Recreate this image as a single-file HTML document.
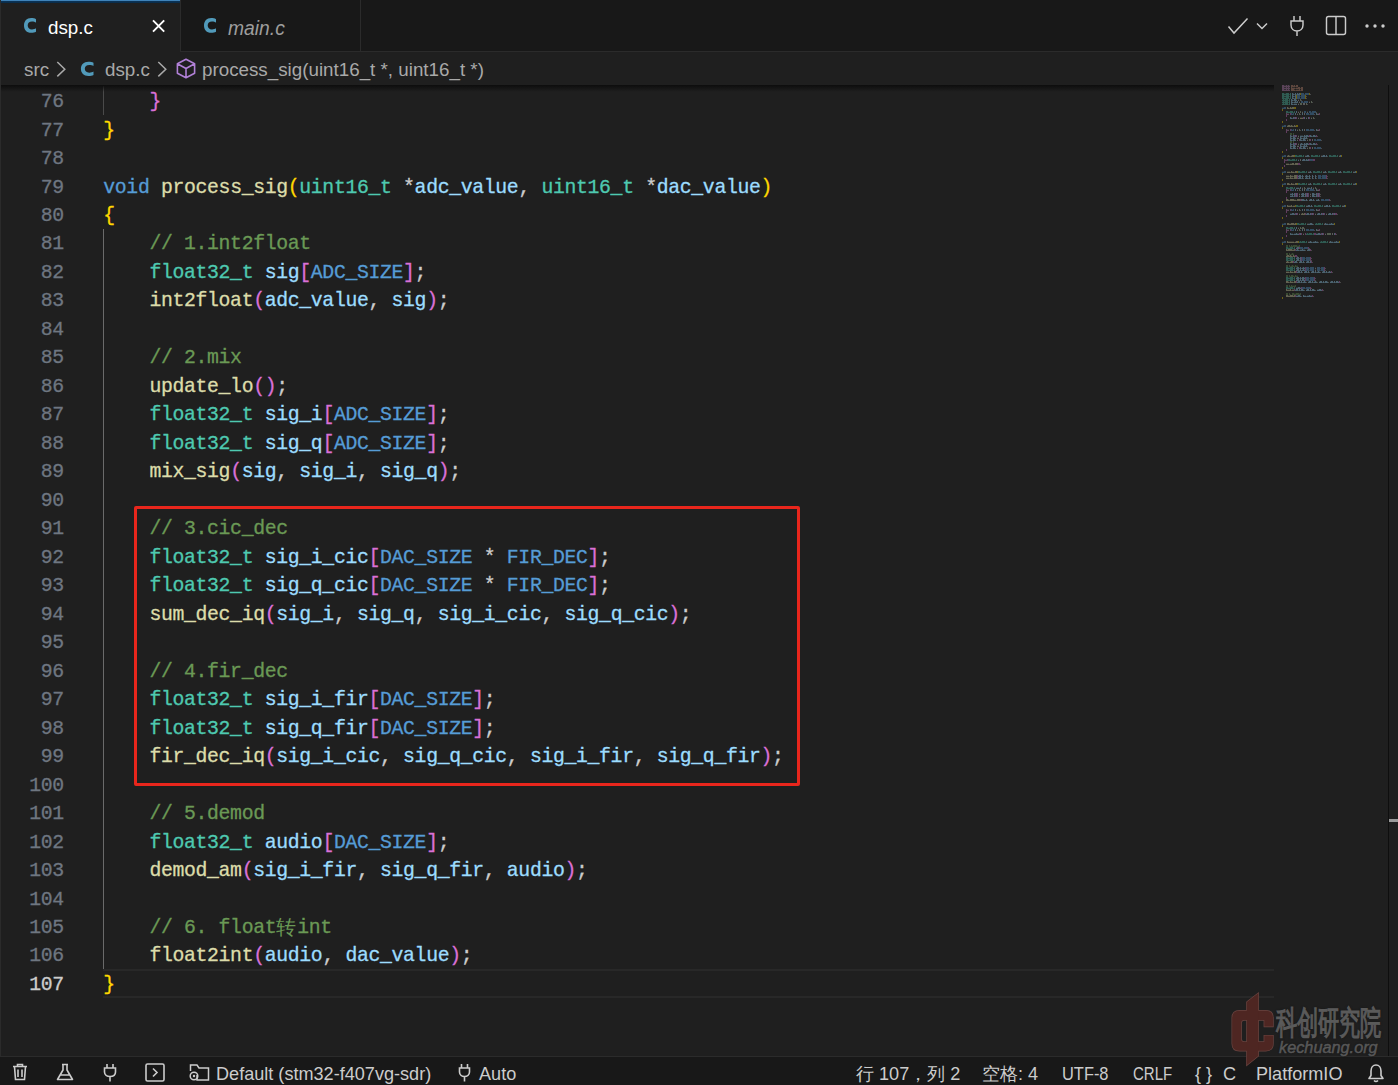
<!DOCTYPE html>
<html><head><meta charset="utf-8">
<style>
*{margin:0;padding:0;box-sizing:border-box}
html,body{width:1398px;height:1085px;overflow:hidden;background:#1f1f1f}
body{position:relative;font-family:"Liberation Sans",sans-serif;color:#cccccc}
.abs{position:absolute}
#tabs{position:absolute;left:0;top:0;width:1398px;height:52px;background:#181818;border-bottom:1px solid #2b2b2b}
#tab1{position:absolute;left:0;top:0;width:181px;height:52px;background:#1f1f1f;border-right:1px solid #2b2b2b}
#tab1 .topb{position:absolute;left:0;top:0;width:180px;height:3px;background:linear-gradient(#3f82b8 0,#3f82b8 1px,#0b3458 1px,#082a48 3px)}
#tab2{position:absolute;left:181px;top:0;width:180px;height:51px;background:#181818;border-right:1px solid #2b2b2b}
.ttxt{position:absolute;font-size:18.8px;line-height:1;white-space:pre}
#bc{position:absolute;left:0;top:52px;width:1398px;height:33px;background:#1f1f1f}
.bct{position:absolute;font-size:18.8px;line-height:1;color:#a9a9a9;white-space:pre}
#editor{position:absolute;left:0;top:85px;width:1398px;height:971px;background:#1f1f1f;overflow:hidden}
#code{position:absolute;left:0;top:-85px;width:1398px;height:1085px}
.ln{position:absolute;left:103.3px;height:28.48px;line-height:28.48px;font-family:"Liberation Mono",monospace;font-size:19.8px;letter-spacing:-0.342px;-webkit-text-stroke-width:0.3px;white-space:pre;padding-top:1.7px}
.nm{position:absolute;left:0;width:63.8px;text-align:right;height:28.48px;line-height:28.48px;font-family:"Liberation Mono",monospace;font-size:19.8px;letter-spacing:-0.342px;-webkit-text-stroke-width:0.3px;color:#6e7681;padding-top:1.7px}
.nm.act{color:#cccccc}
.kw{color:#569cd6}.fn{color:#dcdcaa}.ty{color:#4ec9b0}.var{color:#9cdcfe}.mac{color:#569cd6}
.cm{color:#6a9955}.p{color:#cccccc}.b1{color:#ffd700}.b2{color:#da70d6}.b3{color:#179fff}
.zh{display:inline-block;width:21px;text-indent:-0.5px;position:relative;top:-1.5px;font-family:"Liberation Sans",sans-serif;font-size:20px;vertical-align:top;-webkit-text-stroke-width:0}
.guide{position:absolute;width:1.4px}
#curline{position:absolute;left:103px;top:969.3px;width:1171px;height:28.5px;border-top:2.6px solid #282828;border-bottom:2.6px solid #282828}
#redbox{position:absolute;left:134px;top:506px;width:666px;height:279.5px;border:3.8px solid #e8261c;border-radius:2px}
#shadow{position:absolute;left:0;top:85px;width:1274px;height:7px;background:linear-gradient(#0d0d0d,rgba(0,0,0,0))}
.minimap{position:absolute;left:1282px;top:85px}
#vsb{position:absolute;left:1388px;top:85px;width:1px;height:971px;background:#0e0e0e}
#cursormark{position:absolute;left:1389px;top:819px;width:9px;height:3px;background:#9a9a9a}
#leftb{position:absolute;left:0;top:0;width:1px;height:1056px;background:#2b2b2b}
#status{position:absolute;left:0;top:1056px;width:1398px;height:29px;background:#181818;border-top:1px solid #2b2b2b}
.st{position:absolute;font-size:18.1px;line-height:1;color:#cccccc;white-space:pre;top:1065px}
#ov{position:absolute;left:0;top:0}
.wmzh{position:absolute;left:1276px;top:1008px;font-size:21.4px;line-height:1;color:#5a5a5a;-webkit-text-stroke:0.8px #5a5a5a;white-space:pre;transform-origin:0 0;transform:scale(1,1.55);text-shadow:0 0 2px #111}
.wmen{position:absolute;left:1279px;top:1039px;font-size:16.3px;line-height:1;color:#585858;font-style:italic;-webkit-text-stroke:0.5px #585858;white-space:pre;text-shadow:0 0 2px #111}
</style></head><body>
<div id="tabs">
  <div id="tab1"><div class="topb"></div>
    <div class="ttxt" style="left:48px;top:19px;color:#ffffff">dsp.c</div>
  </div>
  <div id="tab2">
    <div class="ttxt" style="left:47px;top:19px;color:#9d9d9d;font-style:italic;font-size:19.3px">main.c</div>
  </div>
</div>
<div id="bc">
  <div class="bct" style="left:24px;top:9px">src</div>
  <div class="bct" style="left:105px;top:9px">dsp.c</div>
  <div class="bct" style="left:202px;top:9px">process_sig(uint16_t *, uint16_t *)</div>
</div>
<div id="editor"><div id="code">
<div class="nm" style="top:86.40px">76</div>
<div class="nm" style="top:114.88px">77</div>
<div class="nm" style="top:143.36px">78</div>
<div class="nm" style="top:171.84px">79</div>
<div class="nm" style="top:200.32px">80</div>
<div class="nm" style="top:228.80px">81</div>
<div class="nm" style="top:257.28px">82</div>
<div class="nm" style="top:285.76px">83</div>
<div class="nm" style="top:314.24px">84</div>
<div class="nm" style="top:342.72px">85</div>
<div class="nm" style="top:371.20px">86</div>
<div class="nm" style="top:399.68px">87</div>
<div class="nm" style="top:428.16px">88</div>
<div class="nm" style="top:456.64px">89</div>
<div class="nm" style="top:485.12px">90</div>
<div class="nm" style="top:513.60px">91</div>
<div class="nm" style="top:542.08px">92</div>
<div class="nm" style="top:570.56px">93</div>
<div class="nm" style="top:599.04px">94</div>
<div class="nm" style="top:627.52px">95</div>
<div class="nm" style="top:656.00px">96</div>
<div class="nm" style="top:684.48px">97</div>
<div class="nm" style="top:712.96px">98</div>
<div class="nm" style="top:741.44px">99</div>
<div class="nm" style="top:769.92px">100</div>
<div class="nm" style="top:798.40px">101</div>
<div class="nm" style="top:826.88px">102</div>
<div class="nm" style="top:855.36px">103</div>
<div class="nm" style="top:883.84px">104</div>
<div class="nm" style="top:912.32px">105</div>
<div class="nm" style="top:940.80px">106</div>
<div class="nm act" style="top:969.28px">107</div>
<div class="guide" style="left:103px;top:86px;height:28.5px;background:#4a4a4a"></div>
<div class="guide" style="left:103px;top:228.8px;height:740.5px;background:#6a6a6a"></div>
<div id="curline"></div>
<div class="ln" style="top:86.40px"><span class="p">    </span><span class="b2">}</span></div>
<div class="ln" style="top:114.88px"><span class="b1">}</span></div>
<div class="ln" style="top:143.36px"></div>
<div class="ln" style="top:171.84px"><span class="kw">void</span><span class="p"> </span><span class="fn">process_sig</span><span class="b1">(</span><span class="ty">uint16_t</span><span class="p"> *</span><span class="var">adc_value</span><span class="p">, </span><span class="ty">uint16_t</span><span class="p"> *</span><span class="var">dac_value</span><span class="b1">)</span></div>
<div class="ln" style="top:200.32px"><span class="b1">{</span></div>
<div class="ln" style="top:228.80px"><span class="p">    </span><span class="cm">// 1.int2float</span></div>
<div class="ln" style="top:257.28px"><span class="p">    </span><span class="ty">float32_t</span><span class="p"> </span><span class="var">sig</span><span class="b2">[</span><span class="mac">ADC_SIZE</span><span class="b2">]</span><span class="p">;</span></div>
<div class="ln" style="top:285.76px"><span class="p">    </span><span class="fn">int2float</span><span class="b2">(</span><span class="var">adc_value</span><span class="p">, </span><span class="var">sig</span><span class="b2">)</span><span class="p">;</span></div>
<div class="ln" style="top:314.24px"></div>
<div class="ln" style="top:342.72px"><span class="p">    </span><span class="cm">// 2.mix</span></div>
<div class="ln" style="top:371.20px"><span class="p">    </span><span class="fn">update_lo</span><span class="b2">()</span><span class="p">;</span></div>
<div class="ln" style="top:399.68px"><span class="p">    </span><span class="ty">float32_t</span><span class="p"> </span><span class="var">sig_i</span><span class="b2">[</span><span class="mac">ADC_SIZE</span><span class="b2">]</span><span class="p">;</span></div>
<div class="ln" style="top:428.16px"><span class="p">    </span><span class="ty">float32_t</span><span class="p"> </span><span class="var">sig_q</span><span class="b2">[</span><span class="mac">ADC_SIZE</span><span class="b2">]</span><span class="p">;</span></div>
<div class="ln" style="top:456.64px"><span class="p">    </span><span class="fn">mix_sig</span><span class="b2">(</span><span class="var">sig</span><span class="p">, </span><span class="var">sig_i</span><span class="p">, </span><span class="var">sig_q</span><span class="b2">)</span><span class="p">;</span></div>
<div class="ln" style="top:485.12px"></div>
<div class="ln" style="top:513.60px"><span class="p">    </span><span class="cm">// 3.cic_dec</span></div>
<div class="ln" style="top:542.08px"><span class="p">    </span><span class="ty">float32_t</span><span class="p"> </span><span class="var">sig_i_cic</span><span class="b2">[</span><span class="mac">DAC_SIZE</span><span class="p"> * </span><span class="mac">FIR_DEC</span><span class="b2">]</span><span class="p">;</span></div>
<div class="ln" style="top:570.56px"><span class="p">    </span><span class="ty">float32_t</span><span class="p"> </span><span class="var">sig_q_cic</span><span class="b2">[</span><span class="mac">DAC_SIZE</span><span class="p"> * </span><span class="mac">FIR_DEC</span><span class="b2">]</span><span class="p">;</span></div>
<div class="ln" style="top:599.04px"><span class="p">    </span><span class="fn">sum_dec_iq</span><span class="b2">(</span><span class="var">sig_i</span><span class="p">, </span><span class="var">sig_q</span><span class="p">, </span><span class="var">sig_i_cic</span><span class="p">, </span><span class="var">sig_q_cic</span><span class="b2">)</span><span class="p">;</span></div>
<div class="ln" style="top:627.52px"></div>
<div class="ln" style="top:656.00px"><span class="p">    </span><span class="cm">// 4.fir_dec</span></div>
<div class="ln" style="top:684.48px"><span class="p">    </span><span class="ty">float32_t</span><span class="p"> </span><span class="var">sig_i_fir</span><span class="b2">[</span><span class="mac">DAC_SIZE</span><span class="b2">]</span><span class="p">;</span></div>
<div class="ln" style="top:712.96px"><span class="p">    </span><span class="ty">float32_t</span><span class="p"> </span><span class="var">sig_q_fir</span><span class="b2">[</span><span class="mac">DAC_SIZE</span><span class="b2">]</span><span class="p">;</span></div>
<div class="ln" style="top:741.44px"><span class="p">    </span><span class="fn">fir_dec_iq</span><span class="b2">(</span><span class="var">sig_i_cic</span><span class="p">, </span><span class="var">sig_q_cic</span><span class="p">, </span><span class="var">sig_i_fir</span><span class="p">, </span><span class="var">sig_q_fir</span><span class="b2">)</span><span class="p">;</span></div>
<div class="ln" style="top:769.92px"></div>
<div class="ln" style="top:798.40px"><span class="p">    </span><span class="cm">// 5.demod</span></div>
<div class="ln" style="top:826.88px"><span class="p">    </span><span class="ty">float32_t</span><span class="p"> </span><span class="var">audio</span><span class="b2">[</span><span class="mac">DAC_SIZE</span><span class="b2">]</span><span class="p">;</span></div>
<div class="ln" style="top:855.36px"><span class="p">    </span><span class="fn">demod_am</span><span class="b2">(</span><span class="var">sig_i_fir</span><span class="p">, </span><span class="var">sig_q_fir</span><span class="p">, </span><span class="var">audio</span><span class="b2">)</span><span class="p">;</span></div>
<div class="ln" style="top:883.84px"></div>
<div class="ln" style="top:912.32px"><span class="p">    </span><span class="cm">// 6. float</span><span class="cm zh">转</span><span class="cm">int</span></div>
<div class="ln" style="top:940.80px"><span class="p">    </span><span class="fn">float2int</span><span class="b2">(</span><span class="var">audio</span><span class="p">, </span><span class="var">dac_value</span><span class="b2">)</span><span class="p">;</span></div>
<div class="ln" style="top:969.28px"><span class="b1">}</span></div>
<div id="redbox"></div>
</div></div>
<div id="shadow"></div>
<svg class="minimap" width="110" height="230" viewBox="1282 85 110 230"><g opacity="0.6"><path fill="#c586c0" d="M1282 85.3h.8v1.5h-.8zM1283 85.3h.8v1.5h-.8zM1284 85.8h.8v1h-.8zM1285 85.8h.8v1h-.8zM1286 85.3h.8v1.5h-.8zM1287 85.8h.8v1h-.8zM1288 85.3h.8v1.5h-.8zM1289 85.8h.8v1h-.8zM1282 87.3h.8v1.5h-.8zM1283 87.3h.8v1.5h-.8zM1284 87.8h.8v1h-.8zM1285 87.8h.8v1h-.8zM1286 87.3h.8v1.5h-.8zM1287 87.8h.8v1h-.8zM1288 87.3h.8v1.5h-.8zM1289 87.8h.8v1h-.8zM1282 89.3h.8v1.5h-.8zM1283 89.3h.8v1.5h-.8zM1284 89.8h.8v1h-.8zM1285 89.8h.8v1h-.8zM1286 89.3h.8v1.5h-.8zM1287 89.8h.8v1h-.8zM1288 89.3h.8v1.5h-.8zM1289 89.8h.8v1h-.8zM1286 113.3h.8v1.5h-.8zM1287 113.8h.8v1h-.8zM1288 113.8h.8v1h-.8zM1286 129.3h.8v1.5h-.8zM1287 129.8h.8v1h-.8zM1288 129.8h.8v1h-.8zM1284 159.3h.8v1.5h-.8zM1285 159.8h.8v1h-.8zM1286 159.8h.8v1h-.8zM1286 189.3h.8v1.5h-.8zM1287 189.8h.8v1h-.8zM1288 189.8h.8v1h-.8zM1286 209.3h.8v1.5h-.8zM1287 209.8h.8v1h-.8zM1288 209.8h.8v1h-.8zM1286 229.3h.8v1.5h-.8zM1287 229.8h.8v1h-.8zM1288 229.8h.8v1h-.8z"/><path fill="#ce9178" d="M1291 85.3h.8v1.5h-.8zM1292 85.3h.8v1.5h-.8zM1293 85.8h.8v1h-.8zM1294 85.3h.8v1.5h-.8zM1295 86.2h.8v.6h-.8zM1296 85.3h.8v1.5h-.8zM1297 85.3h.8v1.5h-.8zM1291 87.3h.8v1.5h-.8zM1292 87.8h.8v1h-.8zM1293 87.8h.8v1h-.8zM1294 87.8h.8v1h-.8zM1295 88.2h.8v.6h-.8zM1296 87.8h.8v1h-.8zM1297 87.8h.8v1h-.8zM1298 87.3h.8v1.5h-.8zM1299 87.3h.8v1.5h-.8zM1300 88.2h.8v.6h-.8zM1301 87.3h.8v1.5h-.8zM1302 87.3h.8v1.5h-.8zM1291 89.3h.8v1.5h-.8zM1292 89.3h.8v1.5h-.8zM1293 89.3h.8v1.5h-.8zM1294 89.8h.8v1h-.8zM1295 90.2h.8v.6h-.8zM1296 89.8h.8v1h-.8zM1297 89.8h.8v1h-.8zM1298 89.8h.8v1h-.8zM1299 89.3h.8v1.5h-.8zM1300 90.2h.8v.6h-.8zM1301 89.3h.8v1.5h-.8zM1302 89.3h.8v1.5h-.8z"/><path fill="#4ec9b0" d="M1282 93.3h.8v1.5h-.8zM1283 93.3h.8v1.5h-.8zM1284 93.8h.8v1h-.8zM1285 93.8h.8v1h-.8zM1286 93.3h.8v1.5h-.8zM1287 93.3h.8v1.5h-.8zM1288 93.3h.8v1.5h-.8zM1289 94.2h.8v.6h-.8zM1290 93.3h.8v1.5h-.8zM1282 95.3h.8v1.5h-.8zM1283 95.3h.8v1.5h-.8zM1284 95.8h.8v1h-.8zM1285 95.8h.8v1h-.8zM1286 95.3h.8v1.5h-.8zM1287 95.3h.8v1.5h-.8zM1288 95.3h.8v1.5h-.8zM1289 96.2h.8v.6h-.8zM1290 95.3h.8v1.5h-.8zM1282 97.3h.8v1.5h-.8zM1283 97.3h.8v1.5h-.8zM1284 97.8h.8v1h-.8zM1285 97.8h.8v1h-.8zM1286 97.3h.8v1.5h-.8zM1287 97.3h.8v1.5h-.8zM1288 97.3h.8v1.5h-.8zM1289 98.2h.8v.6h-.8zM1290 97.3h.8v1.5h-.8zM1282 99.8h.8v1h-.8zM1283 99.3h.8v1.5h-.8zM1284 99.8h.8v1h-.8zM1285 99.3h.8v1.5h-.8zM1286 99.3h.8v1.5h-.8zM1287 99.3h.8v1.5h-.8zM1288 100.2h.8v.6h-.8zM1289 99.3h.8v1.5h-.8zM1282 101.8h.8v1h-.8zM1283 101.3h.8v1.5h-.8zM1284 101.8h.8v1h-.8zM1285 101.3h.8v1.5h-.8zM1286 101.3h.8v1.5h-.8zM1287 101.3h.8v1.5h-.8zM1288 102.2h.8v.6h-.8zM1289 101.3h.8v1.5h-.8zM1282 103.8h.8v1h-.8zM1283 103.3h.8v1.5h-.8zM1284 103.8h.8v1h-.8zM1285 103.3h.8v1.5h-.8zM1286 103.3h.8v1.5h-.8zM1287 103.3h.8v1.5h-.8zM1288 104.2h.8v.6h-.8zM1289 103.3h.8v1.5h-.8zM1286 111.3h.8v1.5h-.8zM1287 111.3h.8v1.5h-.8zM1288 111.8h.8v1h-.8zM1289 111.8h.8v1h-.8zM1290 111.3h.8v1.5h-.8zM1291 111.3h.8v1.5h-.8zM1292 111.3h.8v1.5h-.8zM1293 112.2h.8v.6h-.8zM1294 111.3h.8v1.5h-.8zM1295 155.3h.8v1.5h-.8zM1296 155.3h.8v1.5h-.8zM1297 155.8h.8v1h-.8zM1298 155.8h.8v1h-.8zM1299 155.3h.8v1.5h-.8zM1300 155.3h.8v1.5h-.8zM1301 155.3h.8v1.5h-.8zM1302 156.2h.8v.6h-.8zM1303 155.3h.8v1.5h-.8zM1311 155.3h.8v1.5h-.8zM1312 155.3h.8v1.5h-.8zM1313 155.8h.8v1h-.8zM1314 155.8h.8v1h-.8zM1315 155.3h.8v1.5h-.8zM1316 155.3h.8v1.5h-.8zM1317 155.3h.8v1.5h-.8zM1318 156.2h.8v.6h-.8zM1319 155.3h.8v1.5h-.8zM1329 155.3h.8v1.5h-.8zM1330 155.3h.8v1.5h-.8zM1331 155.8h.8v1h-.8zM1332 155.8h.8v1h-.8zM1333 155.3h.8v1.5h-.8zM1334 155.3h.8v1.5h-.8zM1335 155.3h.8v1.5h-.8zM1336 156.2h.8v.6h-.8zM1337 155.3h.8v1.5h-.8zM1288 159.3h.8v1.5h-.8zM1289 159.3h.8v1.5h-.8zM1290 159.8h.8v1h-.8zM1291 159.8h.8v1h-.8zM1292 159.3h.8v1.5h-.8zM1293 159.3h.8v1.5h-.8zM1294 159.3h.8v1.5h-.8zM1295 160.2h.8v.6h-.8zM1296 159.3h.8v1.5h-.8zM1298 171.3h.8v1.5h-.8zM1299 171.3h.8v1.5h-.8zM1300 171.8h.8v1h-.8zM1301 171.8h.8v1h-.8zM1302 171.3h.8v1.5h-.8zM1303 171.3h.8v1.5h-.8zM1304 171.3h.8v1.5h-.8zM1305 172.2h.8v.6h-.8zM1306 171.3h.8v1.5h-.8zM1313 171.3h.8v1.5h-.8zM1314 171.3h.8v1.5h-.8zM1315 171.8h.8v1h-.8zM1316 171.8h.8v1h-.8zM1317 171.3h.8v1.5h-.8zM1318 171.3h.8v1.5h-.8zM1319 171.3h.8v1.5h-.8zM1320 172.2h.8v.6h-.8zM1321 171.3h.8v1.5h-.8zM1328 171.3h.8v1.5h-.8zM1329 171.3h.8v1.5h-.8zM1330 171.8h.8v1h-.8zM1331 171.8h.8v1h-.8zM1332 171.3h.8v1.5h-.8zM1333 171.3h.8v1.5h-.8zM1334 171.3h.8v1.5h-.8zM1335 172.2h.8v.6h-.8zM1336 171.3h.8v1.5h-.8zM1343 171.3h.8v1.5h-.8zM1344 171.3h.8v1.5h-.8zM1345 171.8h.8v1h-.8zM1346 171.8h.8v1h-.8zM1347 171.3h.8v1.5h-.8zM1348 171.3h.8v1.5h-.8zM1349 171.3h.8v1.5h-.8zM1350 172.2h.8v.6h-.8zM1351 171.3h.8v1.5h-.8zM1298 183.3h.8v1.5h-.8zM1299 183.3h.8v1.5h-.8zM1300 183.8h.8v1h-.8zM1301 183.8h.8v1h-.8zM1302 183.3h.8v1.5h-.8zM1303 183.3h.8v1.5h-.8zM1304 183.3h.8v1.5h-.8zM1305 184.2h.8v.6h-.8zM1306 183.3h.8v1.5h-.8zM1313 183.3h.8v1.5h-.8zM1314 183.3h.8v1.5h-.8zM1315 183.8h.8v1h-.8zM1316 183.8h.8v1h-.8zM1317 183.3h.8v1.5h-.8zM1318 183.3h.8v1.5h-.8zM1319 183.3h.8v1.5h-.8zM1320 184.2h.8v.6h-.8zM1321 183.3h.8v1.5h-.8zM1328 183.3h.8v1.5h-.8zM1329 183.3h.8v1.5h-.8zM1330 183.8h.8v1h-.8zM1331 183.8h.8v1h-.8zM1332 183.3h.8v1.5h-.8zM1333 183.3h.8v1.5h-.8zM1334 183.3h.8v1.5h-.8zM1335 184.2h.8v.6h-.8zM1336 183.3h.8v1.5h-.8zM1343 183.3h.8v1.5h-.8zM1344 183.3h.8v1.5h-.8zM1345 183.8h.8v1h-.8zM1346 183.8h.8v1h-.8zM1347 183.3h.8v1.5h-.8zM1348 183.3h.8v1.5h-.8zM1349 183.3h.8v1.5h-.8zM1350 184.2h.8v.6h-.8zM1351 183.3h.8v1.5h-.8zM1286 187.3h.8v1.5h-.8zM1287 187.3h.8v1.5h-.8zM1288 187.8h.8v1h-.8zM1289 187.8h.8v1h-.8zM1290 187.3h.8v1.5h-.8zM1291 187.3h.8v1.5h-.8zM1292 187.3h.8v1.5h-.8zM1293 188.2h.8v.6h-.8zM1294 187.3h.8v1.5h-.8zM1296 205.3h.8v1.5h-.8zM1297 205.3h.8v1.5h-.8zM1298 205.8h.8v1h-.8zM1299 205.8h.8v1h-.8zM1300 205.3h.8v1.5h-.8zM1301 205.3h.8v1.5h-.8zM1302 205.3h.8v1.5h-.8zM1303 206.2h.8v.6h-.8zM1304 205.3h.8v1.5h-.8zM1314 205.3h.8v1.5h-.8zM1315 205.3h.8v1.5h-.8zM1316 205.8h.8v1h-.8zM1317 205.8h.8v1h-.8zM1318 205.3h.8v1.5h-.8zM1319 205.3h.8v1.5h-.8zM1320 205.3h.8v1.5h-.8zM1321 206.2h.8v.6h-.8zM1322 205.3h.8v1.5h-.8zM1332 205.3h.8v1.5h-.8zM1333 205.3h.8v1.5h-.8zM1334 205.8h.8v1h-.8zM1335 205.8h.8v1h-.8zM1336 205.3h.8v1.5h-.8zM1337 205.3h.8v1.5h-.8zM1338 205.3h.8v1.5h-.8zM1339 206.2h.8v.6h-.8zM1340 205.3h.8v1.5h-.8zM1297 223.3h.8v1.5h-.8zM1298 223.3h.8v1.5h-.8zM1299 223.8h.8v1h-.8zM1300 223.8h.8v1h-.8zM1301 223.3h.8v1.5h-.8zM1302 223.3h.8v1.5h-.8zM1303 223.3h.8v1.5h-.8zM1304 224.2h.8v.6h-.8zM1305 223.3h.8v1.5h-.8zM1315 223.8h.8v1h-.8zM1316 223.3h.8v1.5h-.8zM1317 223.8h.8v1h-.8zM1318 223.3h.8v1.5h-.8zM1319 223.3h.8v1.5h-.8zM1320 223.3h.8v1.5h-.8zM1321 224.2h.8v.6h-.8zM1322 223.3h.8v1.5h-.8zM1286 227.3h.8v1.5h-.8zM1287 227.3h.8v1.5h-.8zM1288 227.8h.8v1h-.8zM1289 227.8h.8v1h-.8zM1290 227.3h.8v1.5h-.8zM1291 227.3h.8v1.5h-.8zM1292 227.3h.8v1.5h-.8zM1293 228.2h.8v.6h-.8zM1294 227.3h.8v1.5h-.8zM1306 233.8h.8v1h-.8zM1307 233.3h.8v1.5h-.8zM1308 233.8h.8v1h-.8zM1309 233.3h.8v1.5h-.8zM1310 233.3h.8v1.5h-.8zM1311 233.3h.8v1.5h-.8zM1312 234.2h.8v.6h-.8zM1313 233.3h.8v1.5h-.8zM1299 241.8h.8v1h-.8zM1300 241.3h.8v1.5h-.8zM1301 241.8h.8v1h-.8zM1302 241.3h.8v1.5h-.8zM1303 241.3h.8v1.5h-.8zM1304 241.3h.8v1.5h-.8zM1305 242.2h.8v.6h-.8zM1306 241.3h.8v1.5h-.8zM1320 241.8h.8v1h-.8zM1321 241.3h.8v1.5h-.8zM1322 241.8h.8v1h-.8zM1323 241.3h.8v1.5h-.8zM1324 241.3h.8v1.5h-.8zM1325 241.3h.8v1.5h-.8zM1326 242.2h.8v.6h-.8zM1327 241.3h.8v1.5h-.8zM1286 247.3h.8v1.5h-.8zM1287 247.3h.8v1.5h-.8zM1288 247.8h.8v1h-.8zM1289 247.8h.8v1h-.8zM1290 247.3h.8v1.5h-.8zM1291 247.3h.8v1.5h-.8zM1292 247.3h.8v1.5h-.8zM1293 248.2h.8v.6h-.8zM1294 247.3h.8v1.5h-.8zM1286 257.3h.8v1.5h-.8zM1287 257.3h.8v1.5h-.8zM1288 257.8h.8v1h-.8zM1289 257.8h.8v1h-.8zM1290 257.3h.8v1.5h-.8zM1291 257.3h.8v1.5h-.8zM1292 257.3h.8v1.5h-.8zM1293 258.2h.8v.6h-.8zM1294 257.3h.8v1.5h-.8zM1286 259.3h.8v1.5h-.8zM1287 259.3h.8v1.5h-.8zM1288 259.8h.8v1h-.8zM1289 259.8h.8v1h-.8zM1290 259.3h.8v1.5h-.8zM1291 259.3h.8v1.5h-.8zM1292 259.3h.8v1.5h-.8zM1293 260.2h.8v.6h-.8zM1294 259.3h.8v1.5h-.8zM1286 267.3h.8v1.5h-.8zM1287 267.3h.8v1.5h-.8zM1288 267.8h.8v1h-.8zM1289 267.8h.8v1h-.8zM1290 267.3h.8v1.5h-.8zM1291 267.3h.8v1.5h-.8zM1292 267.3h.8v1.5h-.8zM1293 268.2h.8v.6h-.8zM1294 267.3h.8v1.5h-.8zM1286 269.3h.8v1.5h-.8zM1287 269.3h.8v1.5h-.8zM1288 269.8h.8v1h-.8zM1289 269.8h.8v1h-.8zM1290 269.3h.8v1.5h-.8zM1291 269.3h.8v1.5h-.8zM1292 269.3h.8v1.5h-.8zM1293 270.2h.8v.6h-.8zM1294 269.3h.8v1.5h-.8zM1286 277.3h.8v1.5h-.8zM1287 277.3h.8v1.5h-.8zM1288 277.8h.8v1h-.8zM1289 277.8h.8v1h-.8zM1290 277.3h.8v1.5h-.8zM1291 277.3h.8v1.5h-.8zM1292 277.3h.8v1.5h-.8zM1293 278.2h.8v.6h-.8zM1294 277.3h.8v1.5h-.8zM1286 279.3h.8v1.5h-.8zM1287 279.3h.8v1.5h-.8zM1288 279.8h.8v1h-.8zM1289 279.8h.8v1h-.8zM1290 279.3h.8v1.5h-.8zM1291 279.3h.8v1.5h-.8zM1292 279.3h.8v1.5h-.8zM1293 280.2h.8v.6h-.8zM1294 279.3h.8v1.5h-.8zM1286 287.3h.8v1.5h-.8zM1287 287.3h.8v1.5h-.8zM1288 287.8h.8v1h-.8zM1289 287.8h.8v1h-.8zM1290 287.3h.8v1.5h-.8zM1291 287.3h.8v1.5h-.8zM1292 287.3h.8v1.5h-.8zM1293 288.2h.8v.6h-.8zM1294 287.3h.8v1.5h-.8z"/><path fill="#9cdcfe" d="M1292 93.3h.8v1.5h-.8zM1293 93.8h.8v1h-.8zM1294 94.2h.8v.6h-.8zM1295 93.3h.8v1.5h-.8zM1296 94.2h.8v.6h-.8zM1297 93.3h.8v1.5h-.8zM1298 93.8h.8v1h-.8zM1299 93.3h.8v1.5h-.8zM1292 95.3h.8v1.5h-.8zM1293 95.8h.8v1h-.8zM1294 96.2h.8v.6h-.8zM1295 95.3h.8v1.5h-.8zM1292 97.3h.8v1.5h-.8zM1293 97.8h.8v1h-.8zM1294 98.2h.8v.6h-.8zM1295 97.3h.8v1.5h-.8zM1291 99.3h.8v1.5h-.8zM1292 99.8h.8v1h-.8zM1293 100.2h.8v.6h-.8zM1294 99.3h.8v1.5h-.8zM1295 99.3h.8v1.5h-.8zM1296 99.8h.8v1h-.8zM1291 101.3h.8v1.5h-.8zM1292 101.8h.8v1h-.8zM1293 102.2h.8v.6h-.8zM1294 101.8h.8v1h-.8zM1295 101.3h.8v1.5h-.8zM1296 101.8h.8v1h-.8zM1297 101.3h.8v1.5h-.8zM1291 103.3h.8v1.5h-.8zM1292 103.8h.8v1h-.8zM1293 104.2h.8v.6h-.8zM1294 103.8h.8v1h-.8zM1295 103.8h.8v1h-.8zM1296 103.8h.8v1h-.8zM1296 111.3h.8v1.5h-.8zM1295 113.3h.8v1.5h-.8zM1302 113.3h.8v1.5h-.8zM1316 113.3h.8v1.5h-.8zM1290 117.3h.8v1.5h-.8zM1291 117.8h.8v1h-.8zM1292 118.2h.8v.6h-.8zM1293 117.3h.8v1.5h-.8zM1295 117.3h.8v1.5h-.8zM1304 117.3h.8v1.5h-.8zM1308 117.3h.8v1.5h-.8zM1295 129.3h.8v1.5h-.8zM1302 129.3h.8v1.5h-.8zM1316 129.3h.8v1.5h-.8zM1290 135.3h.8v1.5h-.8zM1291 135.8h.8v1h-.8zM1292 136.2h.8v.6h-.8zM1293 135.3h.8v1.5h-.8zM1295 135.3h.8v1.5h-.8zM1300 135.8h.8v1h-.8zM1301 135.8h.8v1h-.8zM1302 135.8h.8v1h-.8zM1303 136.2h.8v.6h-.8zM1304 135.3h.8v1.5h-.8zM1305 135.8h.8v1h-.8zM1306 135.3h.8v1.5h-.8zM1307 135.3h.8v1.5h-.8zM1308 135.8h.8v1h-.8zM1310 135.3h.8v1.5h-.8zM1311 135.8h.8v1h-.8zM1312 136.2h.8v.6h-.8zM1313 135.3h.8v1.5h-.8zM1314 135.3h.8v1.5h-.8zM1315 135.8h.8v1h-.8zM1290 137.3h.8v1.5h-.8zM1291 137.8h.8v1h-.8zM1292 138.2h.8v.6h-.8zM1293 137.3h.8v1.5h-.8zM1294 137.3h.8v1.5h-.8zM1295 137.8h.8v1h-.8zM1300 137.3h.8v1.5h-.8zM1301 137.8h.8v1h-.8zM1302 138.2h.8v.6h-.8zM1303 137.8h.8v1h-.8zM1304 137.3h.8v1.5h-.8zM1305 137.8h.8v1h-.8zM1306 137.3h.8v1.5h-.8zM1290 139.3h.8v1.5h-.8zM1291 139.8h.8v1h-.8zM1292 140.2h.8v.6h-.8zM1293 139.3h.8v1.5h-.8zM1294 139.3h.8v1.5h-.8zM1295 139.8h.8v1h-.8zM1300 139.3h.8v1.5h-.8zM1301 139.8h.8v1h-.8zM1302 140.2h.8v.6h-.8zM1303 139.3h.8v1.5h-.8zM1304 139.3h.8v1.5h-.8zM1305 139.8h.8v1h-.8zM1290 143.3h.8v1.5h-.8zM1291 143.8h.8v1h-.8zM1292 144.2h.8v.6h-.8zM1293 143.3h.8v1.5h-.8zM1295 143.3h.8v1.5h-.8zM1300 143.8h.8v1h-.8zM1301 143.3h.8v1.5h-.8zM1302 143.8h.8v1h-.8zM1303 144.2h.8v.6h-.8zM1304 143.3h.8v1.5h-.8zM1305 143.8h.8v1h-.8zM1306 143.3h.8v1.5h-.8zM1307 143.3h.8v1.5h-.8zM1308 143.8h.8v1h-.8zM1310 143.3h.8v1.5h-.8zM1311 143.8h.8v1h-.8zM1312 144.2h.8v.6h-.8zM1313 143.3h.8v1.5h-.8zM1314 143.3h.8v1.5h-.8zM1315 143.8h.8v1h-.8zM1290 145.3h.8v1.5h-.8zM1291 145.8h.8v1h-.8zM1292 146.2h.8v.6h-.8zM1293 145.3h.8v1.5h-.8zM1294 145.3h.8v1.5h-.8zM1295 145.8h.8v1h-.8zM1300 145.3h.8v1.5h-.8zM1301 145.8h.8v1h-.8zM1302 146.2h.8v.6h-.8zM1303 145.8h.8v1h-.8zM1304 145.3h.8v1.5h-.8zM1305 145.8h.8v1h-.8zM1306 145.3h.8v1.5h-.8zM1290 147.3h.8v1.5h-.8zM1291 147.8h.8v1h-.8zM1292 148.2h.8v.6h-.8zM1293 147.3h.8v1.5h-.8zM1294 147.3h.8v1.5h-.8zM1295 147.8h.8v1h-.8zM1300 147.3h.8v1.5h-.8zM1301 147.8h.8v1h-.8zM1302 148.2h.8v.6h-.8zM1303 147.3h.8v1.5h-.8zM1304 147.3h.8v1.5h-.8zM1305 147.8h.8v1h-.8zM1306 155.8h.8v1h-.8zM1307 155.3h.8v1.5h-.8zM1308 155.3h.8v1.5h-.8zM1322 155.8h.8v1h-.8zM1323 155.3h.8v1.5h-.8zM1324 155.3h.8v1.5h-.8zM1325 156.2h.8v.6h-.8zM1326 155.3h.8v1.5h-.8zM1340 155.3h.8v1.5h-.8zM1298 159.8h.8v1h-.8zM1302 159.8h.8v1h-.8zM1303 159.3h.8v1.5h-.8zM1304 159.3h.8v1.5h-.8zM1305 160.2h.8v.6h-.8zM1306 159.3h.8v1.5h-.8zM1307 159.8h.8v1h-.8zM1308 159.3h.8v1.5h-.8zM1309 171.8h.8v1h-.8zM1310 171.3h.8v1.5h-.8zM1324 171.8h.8v1h-.8zM1325 171.3h.8v1.5h-.8zM1339 171.8h.8v1h-.8zM1340 171.3h.8v1.5h-.8zM1354 171.8h.8v1h-.8zM1355 171.3h.8v1.5h-.8zM1298 175.8h.8v1h-.8zM1299 175.3h.8v1.5h-.8zM1300 175.3h.8v1.5h-.8zM1301 176.2h.8v.6h-.8zM1302 175.3h.8v1.5h-.8zM1305 175.8h.8v1h-.8zM1306 175.3h.8v1.5h-.8zM1307 175.8h.8v1h-.8zM1308 176.2h.8v.6h-.8zM1309 175.3h.8v1.5h-.8zM1312 175.3h.8v1.5h-.8zM1315 175.3h.8v1.5h-.8zM1298 177.8h.8v1h-.8zM1299 177.3h.8v1.5h-.8zM1300 177.3h.8v1.5h-.8zM1301 178.2h.8v.6h-.8zM1302 177.3h.8v1.5h-.8zM1305 177.8h.8v1h-.8zM1306 177.3h.8v1.5h-.8zM1307 177.8h.8v1h-.8zM1308 178.2h.8v.6h-.8zM1309 177.3h.8v1.5h-.8zM1312 177.3h.8v1.5h-.8zM1315 177.3h.8v1.5h-.8zM1309 183.8h.8v1h-.8zM1310 183.3h.8v1.5h-.8zM1324 183.8h.8v1h-.8zM1325 183.3h.8v1.5h-.8zM1339 183.8h.8v1h-.8zM1340 183.3h.8v1.5h-.8zM1354 183.8h.8v1h-.8zM1355 183.3h.8v1.5h-.8zM1296 187.8h.8v1h-.8zM1297 187.8h.8v1h-.8zM1298 187.8h.8v1h-.8zM1299 188.2h.8v.6h-.8zM1300 187.3h.8v1.5h-.8zM1307 187.8h.8v1h-.8zM1308 187.8h.8v1h-.8zM1309 187.8h.8v1h-.8zM1310 188.2h.8v.6h-.8zM1311 187.3h.8v1.5h-.8zM1295 189.3h.8v1.5h-.8zM1302 189.3h.8v1.5h-.8zM1316 189.3h.8v1.5h-.8zM1290 193.8h.8v1h-.8zM1291 193.8h.8v1h-.8zM1292 193.3h.8v1.5h-.8zM1293 194.2h.8v.6h-.8zM1294 193.3h.8v1.5h-.8zM1296 193.3h.8v1.5h-.8zM1301 193.8h.8v1h-.8zM1302 193.3h.8v1.5h-.8zM1303 193.3h.8v1.5h-.8zM1304 194.2h.8v.6h-.8zM1305 193.3h.8v1.5h-.8zM1307 193.3h.8v1.5h-.8zM1312 193.3h.8v1.5h-.8zM1313 193.3h.8v1.5h-.8zM1314 193.8h.8v1h-.8zM1315 194.2h.8v.6h-.8zM1316 193.3h.8v1.5h-.8zM1318 193.3h.8v1.5h-.8zM1290 195.8h.8v1h-.8zM1291 195.8h.8v1h-.8zM1292 195.3h.8v1.5h-.8zM1293 196.2h.8v.6h-.8zM1294 195.3h.8v1.5h-.8zM1296 195.3h.8v1.5h-.8zM1301 195.8h.8v1h-.8zM1302 195.3h.8v1.5h-.8zM1303 195.3h.8v1.5h-.8zM1304 196.2h.8v.6h-.8zM1305 195.3h.8v1.5h-.8zM1307 195.3h.8v1.5h-.8zM1312 195.3h.8v1.5h-.8zM1313 195.3h.8v1.5h-.8zM1314 195.8h.8v1h-.8zM1315 196.2h.8v.6h-.8zM1316 195.3h.8v1.5h-.8zM1318 195.3h.8v1.5h-.8zM1302 199.3h.8v1.5h-.8zM1303 199.3h.8v1.5h-.8zM1304 199.8h.8v1h-.8zM1305 200.2h.8v.6h-.8zM1306 199.3h.8v1.5h-.8zM1309 199.8h.8v1h-.8zM1310 199.3h.8v1.5h-.8zM1311 199.3h.8v1.5h-.8zM1312 200.2h.8v.6h-.8zM1313 199.3h.8v1.5h-.8zM1316 199.8h.8v1h-.8zM1317 199.8h.8v1h-.8zM1318 199.3h.8v1.5h-.8zM1307 205.8h.8v1h-.8zM1308 205.3h.8v1.5h-.8zM1309 205.3h.8v1.5h-.8zM1310 206.2h.8v.6h-.8zM1311 205.3h.8v1.5h-.8zM1325 205.8h.8v1h-.8zM1326 205.3h.8v1.5h-.8zM1327 205.3h.8v1.5h-.8zM1328 206.2h.8v.6h-.8zM1329 205.3h.8v1.5h-.8zM1343 205.8h.8v1h-.8zM1344 205.3h.8v1.5h-.8zM1295 209.3h.8v1.5h-.8zM1302 209.3h.8v1.5h-.8zM1316 209.3h.8v1.5h-.8zM1290 213.8h.8v1h-.8zM1291 213.8h.8v1h-.8zM1292 213.3h.8v1.5h-.8zM1293 213.3h.8v1.5h-.8zM1294 213.8h.8v1h-.8zM1296 213.3h.8v1.5h-.8zM1306 213.8h.8v1h-.8zM1307 213.3h.8v1.5h-.8zM1308 213.3h.8v1.5h-.8zM1309 214.2h.8v.6h-.8zM1310 213.3h.8v1.5h-.8zM1312 213.3h.8v1.5h-.8zM1317 213.8h.8v1h-.8zM1318 213.3h.8v1.5h-.8zM1319 213.3h.8v1.5h-.8zM1320 214.2h.8v.6h-.8zM1321 213.3h.8v1.5h-.8zM1323 213.3h.8v1.5h-.8zM1328 213.8h.8v1h-.8zM1329 213.3h.8v1.5h-.8zM1330 213.3h.8v1.5h-.8zM1331 214.2h.8v.6h-.8zM1332 213.3h.8v1.5h-.8zM1334 213.3h.8v1.5h-.8zM1308 223.8h.8v1h-.8zM1309 223.8h.8v1h-.8zM1310 223.3h.8v1.5h-.8zM1311 223.3h.8v1.5h-.8zM1312 223.8h.8v1h-.8zM1325 223.3h.8v1.5h-.8zM1326 223.8h.8v1h-.8zM1327 223.8h.8v1h-.8zM1328 224.2h.8v.6h-.8zM1329 223.8h.8v1h-.8zM1330 223.8h.8v1h-.8zM1331 223.3h.8v1.5h-.8zM1332 223.8h.8v1h-.8zM1333 223.8h.8v1h-.8zM1296 227.3h.8v1.5h-.8zM1295 229.3h.8v1.5h-.8zM1302 229.3h.8v1.5h-.8zM1316 229.3h.8v1.5h-.8zM1290 233.3h.8v1.5h-.8zM1291 233.8h.8v1h-.8zM1292 233.8h.8v1h-.8zM1293 234.2h.8v.6h-.8zM1294 233.8h.8v1h-.8zM1295 233.8h.8v1h-.8zM1296 233.3h.8v1.5h-.8zM1297 233.8h.8v1h-.8zM1298 233.8h.8v1h-.8zM1300 233.3h.8v1.5h-.8zM1316 233.8h.8v1h-.8zM1317 233.8h.8v1h-.8zM1318 233.3h.8v1.5h-.8zM1319 233.3h.8v1.5h-.8zM1320 233.8h.8v1h-.8zM1322 233.3h.8v1.5h-.8zM1334 233.3h.8v1.5h-.8zM1309 241.8h.8v1h-.8zM1310 241.3h.8v1.5h-.8zM1311 241.8h.8v1h-.8zM1312 242.2h.8v.6h-.8zM1313 241.8h.8v1h-.8zM1314 241.8h.8v1h-.8zM1315 241.3h.8v1.5h-.8zM1316 241.8h.8v1h-.8zM1317 241.8h.8v1h-.8zM1330 241.3h.8v1.5h-.8zM1331 241.8h.8v1h-.8zM1332 241.8h.8v1h-.8zM1333 242.2h.8v.6h-.8zM1334 241.8h.8v1h-.8zM1335 241.8h.8v1h-.8zM1336 241.3h.8v1.5h-.8zM1337 241.8h.8v1h-.8zM1338 241.8h.8v1h-.8zM1296 247.8h.8v1h-.8zM1297 247.3h.8v1.5h-.8zM1298 247.3h.8v1.5h-.8zM1296 249.8h.8v1h-.8zM1297 249.3h.8v1.5h-.8zM1298 249.8h.8v1h-.8zM1299 250.2h.8v.6h-.8zM1300 249.8h.8v1h-.8zM1301 249.8h.8v1h-.8zM1302 249.3h.8v1.5h-.8zM1303 249.8h.8v1h-.8zM1304 249.8h.8v1h-.8zM1307 249.8h.8v1h-.8zM1308 249.3h.8v1.5h-.8zM1309 249.3h.8v1.5h-.8zM1296 257.8h.8v1h-.8zM1297 257.3h.8v1.5h-.8zM1298 257.3h.8v1.5h-.8zM1299 258.2h.8v.6h-.8zM1300 257.3h.8v1.5h-.8zM1296 259.8h.8v1h-.8zM1297 259.3h.8v1.5h-.8zM1298 259.3h.8v1.5h-.8zM1299 260.2h.8v.6h-.8zM1300 259.3h.8v1.5h-.8zM1294 261.8h.8v1h-.8zM1295 261.3h.8v1.5h-.8zM1296 261.3h.8v1.5h-.8zM1299 261.8h.8v1h-.8zM1300 261.3h.8v1.5h-.8zM1301 261.3h.8v1.5h-.8zM1302 262.2h.8v.6h-.8zM1303 261.3h.8v1.5h-.8zM1306 261.8h.8v1h-.8zM1307 261.3h.8v1.5h-.8zM1308 261.3h.8v1.5h-.8zM1309 262.2h.8v.6h-.8zM1310 261.3h.8v1.5h-.8zM1296 267.8h.8v1h-.8zM1297 267.3h.8v1.5h-.8zM1298 267.3h.8v1.5h-.8zM1299 268.2h.8v.6h-.8zM1300 267.3h.8v1.5h-.8zM1301 268.2h.8v.6h-.8zM1302 267.8h.8v1h-.8zM1303 267.3h.8v1.5h-.8zM1304 267.8h.8v1h-.8zM1296 269.8h.8v1h-.8zM1297 269.3h.8v1.5h-.8zM1298 269.3h.8v1.5h-.8zM1299 270.2h.8v.6h-.8zM1300 269.3h.8v1.5h-.8zM1301 270.2h.8v.6h-.8zM1302 269.8h.8v1h-.8zM1303 269.3h.8v1.5h-.8zM1304 269.8h.8v1h-.8zM1297 271.8h.8v1h-.8zM1298 271.3h.8v1.5h-.8zM1299 271.3h.8v1.5h-.8zM1300 272.2h.8v.6h-.8zM1301 271.3h.8v1.5h-.8zM1304 271.8h.8v1h-.8zM1305 271.3h.8v1.5h-.8zM1306 271.3h.8v1.5h-.8zM1307 272.2h.8v.6h-.8zM1308 271.3h.8v1.5h-.8zM1311 271.8h.8v1h-.8zM1312 271.3h.8v1.5h-.8zM1313 271.3h.8v1.5h-.8zM1314 272.2h.8v.6h-.8zM1315 271.3h.8v1.5h-.8zM1316 272.2h.8v.6h-.8zM1317 271.8h.8v1h-.8zM1318 271.3h.8v1.5h-.8zM1319 271.8h.8v1h-.8zM1322 271.8h.8v1h-.8zM1323 271.3h.8v1.5h-.8zM1324 271.3h.8v1.5h-.8zM1325 272.2h.8v.6h-.8zM1326 271.3h.8v1.5h-.8zM1327 272.2h.8v.6h-.8zM1328 271.8h.8v1h-.8zM1329 271.3h.8v1.5h-.8zM1330 271.8h.8v1h-.8zM1296 277.8h.8v1h-.8zM1297 277.3h.8v1.5h-.8zM1298 277.3h.8v1.5h-.8zM1299 278.2h.8v.6h-.8zM1300 277.3h.8v1.5h-.8zM1301 278.2h.8v.6h-.8zM1302 277.3h.8v1.5h-.8zM1303 277.3h.8v1.5h-.8zM1304 277.8h.8v1h-.8zM1296 279.8h.8v1h-.8zM1297 279.3h.8v1.5h-.8zM1298 279.3h.8v1.5h-.8zM1299 280.2h.8v.6h-.8zM1300 279.3h.8v1.5h-.8zM1301 280.2h.8v.6h-.8zM1302 279.3h.8v1.5h-.8zM1303 279.3h.8v1.5h-.8zM1304 279.8h.8v1h-.8zM1297 281.8h.8v1h-.8zM1298 281.3h.8v1.5h-.8zM1299 281.3h.8v1.5h-.8zM1300 282.2h.8v.6h-.8zM1301 281.3h.8v1.5h-.8zM1302 282.2h.8v.6h-.8zM1303 281.8h.8v1h-.8zM1304 281.3h.8v1.5h-.8zM1305 281.8h.8v1h-.8zM1308 281.8h.8v1h-.8zM1309 281.3h.8v1.5h-.8zM1310 281.3h.8v1.5h-.8zM1311 282.2h.8v.6h-.8zM1312 281.3h.8v1.5h-.8zM1313 282.2h.8v.6h-.8zM1314 281.8h.8v1h-.8zM1315 281.3h.8v1.5h-.8zM1316 281.8h.8v1h-.8zM1319 281.8h.8v1h-.8zM1320 281.3h.8v1.5h-.8zM1321 281.3h.8v1.5h-.8zM1322 282.2h.8v.6h-.8zM1323 281.3h.8v1.5h-.8zM1324 282.2h.8v.6h-.8zM1325 281.3h.8v1.5h-.8zM1326 281.3h.8v1.5h-.8zM1327 281.8h.8v1h-.8zM1330 281.8h.8v1h-.8zM1331 281.3h.8v1.5h-.8zM1332 281.3h.8v1.5h-.8zM1333 282.2h.8v.6h-.8zM1334 281.3h.8v1.5h-.8zM1335 282.2h.8v.6h-.8zM1336 281.3h.8v1.5h-.8zM1337 281.3h.8v1.5h-.8zM1338 281.8h.8v1h-.8zM1296 287.8h.8v1h-.8zM1297 287.8h.8v1h-.8zM1298 287.3h.8v1.5h-.8zM1299 287.3h.8v1.5h-.8zM1300 287.8h.8v1h-.8zM1295 289.8h.8v1h-.8zM1296 289.3h.8v1.5h-.8zM1297 289.3h.8v1.5h-.8zM1298 290.2h.8v.6h-.8zM1299 289.3h.8v1.5h-.8zM1300 290.2h.8v.6h-.8zM1301 289.3h.8v1.5h-.8zM1302 289.3h.8v1.5h-.8zM1303 289.8h.8v1h-.8zM1306 289.8h.8v1h-.8zM1307 289.3h.8v1.5h-.8zM1308 289.3h.8v1.5h-.8zM1309 290.2h.8v.6h-.8zM1310 289.3h.8v1.5h-.8zM1311 290.2h.8v.6h-.8zM1312 289.3h.8v1.5h-.8zM1313 289.3h.8v1.5h-.8zM1314 289.8h.8v1h-.8zM1317 289.8h.8v1h-.8zM1318 289.8h.8v1h-.8zM1319 289.3h.8v1.5h-.8zM1320 289.3h.8v1.5h-.8zM1321 289.8h.8v1h-.8zM1296 295.8h.8v1h-.8zM1297 295.8h.8v1h-.8zM1298 295.3h.8v1.5h-.8zM1299 295.3h.8v1.5h-.8zM1300 295.8h.8v1h-.8zM1303 295.3h.8v1.5h-.8zM1304 295.8h.8v1h-.8zM1305 295.8h.8v1h-.8zM1306 296.2h.8v.6h-.8zM1307 295.8h.8v1h-.8zM1308 295.8h.8v1h-.8zM1309 295.3h.8v1.5h-.8zM1310 295.8h.8v1h-.8zM1311 295.8h.8v1h-.8z"/><path fill="#ffd700" d="M1300 93.3h.8v1.5h-.8zM1309 93.3h.8v1.5h-.8zM1296 95.3h.8v1.5h-.8zM1305 95.3h.8v1.5h-.8zM1296 97.3h.8v1.5h-.8zM1305 97.3h.8v1.5h-.8zM1294 107.3h.8v1.5h-.8zM1295 107.3h.8v1.5h-.8zM1282 109.3h.8v1.5h-.8zM1282 121.3h.8v1.5h-.8zM1296 125.3h.8v1.5h-.8zM1297 125.3h.8v1.5h-.8zM1282 127.3h.8v1.5h-.8zM1282 151.3h.8v1.5h-.8zM1294 155.3h.8v1.5h-.8zM1341 155.3h.8v1.5h-.8zM1282 157.3h.8v1.5h-.8zM1282 167.3h.8v1.5h-.8zM1297 171.3h.8v1.5h-.8zM1356 171.3h.8v1.5h-.8zM1282 173.3h.8v1.5h-.8zM1282 179.3h.8v1.5h-.8zM1297 183.3h.8v1.5h-.8zM1356 183.3h.8v1.5h-.8zM1282 185.3h.8v1.5h-.8zM1282 201.3h.8v1.5h-.8zM1295 205.3h.8v1.5h-.8zM1345 205.3h.8v1.5h-.8zM1282 207.3h.8v1.5h-.8zM1282 217.3h.8v1.5h-.8zM1296 223.3h.8v1.5h-.8zM1334 223.3h.8v1.5h-.8zM1282 225.3h.8v1.5h-.8zM1282 237.3h.8v1.5h-.8zM1298 241.3h.8v1.5h-.8zM1339 241.3h.8v1.5h-.8zM1282 243.3h.8v1.5h-.8zM1282 297.3h.8v1.5h-.8z"/><path fill="#569cd6" d="M1301 93.3h.8v1.5h-.8zM1302 93.3h.8v1.5h-.8zM1303 93.3h.8v1.5h-.8zM1304 94.2h.8v.6h-.8zM1305 93.3h.8v1.5h-.8zM1306 93.3h.8v1.5h-.8zM1307 93.3h.8v1.5h-.8zM1308 93.3h.8v1.5h-.8zM1297 95.3h.8v1.5h-.8zM1298 95.3h.8v1.5h-.8zM1299 95.3h.8v1.5h-.8zM1300 96.2h.8v.6h-.8zM1301 95.3h.8v1.5h-.8zM1302 95.3h.8v1.5h-.8zM1303 95.3h.8v1.5h-.8zM1304 95.3h.8v1.5h-.8zM1297 97.3h.8v1.5h-.8zM1298 97.3h.8v1.5h-.8zM1299 97.3h.8v1.5h-.8zM1300 98.2h.8v.6h-.8zM1301 97.3h.8v1.5h-.8zM1302 97.3h.8v1.5h-.8zM1303 97.3h.8v1.5h-.8zM1304 97.3h.8v1.5h-.8zM1301 101.3h.8v1.5h-.8zM1302 101.3h.8v1.5h-.8zM1303 102.2h.8v.6h-.8zM1304 101.3h.8v1.5h-.8zM1305 101.3h.8v1.5h-.8zM1306 101.3h.8v1.5h-.8zM1307 101.3h.8v1.5h-.8zM1282 107.8h.8v1h-.8zM1283 107.8h.8v1h-.8zM1284 107.3h.8v1.5h-.8zM1285 107.3h.8v1.5h-.8zM1304 111.3h.8v1.5h-.8zM1305 111.3h.8v1.5h-.8zM1309 111.3h.8v1.5h-.8zM1310 111.3h.8v1.5h-.8zM1311 112.2h.8v.6h-.8zM1312 111.3h.8v1.5h-.8zM1313 111.3h.8v1.5h-.8zM1314 111.3h.8v1.5h-.8zM1315 111.3h.8v1.5h-.8zM1291 113.3h.8v1.5h-.8zM1292 113.8h.8v1h-.8zM1293 113.3h.8v1.5h-.8zM1306 113.3h.8v1.5h-.8zM1307 113.3h.8v1.5h-.8zM1308 113.3h.8v1.5h-.8zM1309 114.2h.8v.6h-.8zM1310 113.3h.8v1.5h-.8zM1311 113.3h.8v1.5h-.8zM1312 113.3h.8v1.5h-.8zM1313 113.3h.8v1.5h-.8zM1282 125.8h.8v1h-.8zM1283 125.8h.8v1h-.8zM1284 125.3h.8v1.5h-.8zM1285 125.3h.8v1.5h-.8zM1291 129.3h.8v1.5h-.8zM1292 129.8h.8v1h-.8zM1293 129.3h.8v1.5h-.8zM1306 129.3h.8v1.5h-.8zM1307 129.3h.8v1.5h-.8zM1308 129.3h.8v1.5h-.8zM1309 130.2h.8v.6h-.8zM1310 129.3h.8v1.5h-.8zM1311 129.3h.8v1.5h-.8zM1312 129.3h.8v1.5h-.8zM1313 129.3h.8v1.5h-.8zM1314 139.3h.8v1.5h-.8zM1315 139.3h.8v1.5h-.8zM1316 140.2h.8v.6h-.8zM1317 139.3h.8v1.5h-.8zM1318 139.3h.8v1.5h-.8zM1319 139.3h.8v1.5h-.8zM1320 139.3h.8v1.5h-.8zM1314 147.3h.8v1.5h-.8zM1315 147.3h.8v1.5h-.8zM1316 148.2h.8v.6h-.8zM1317 147.3h.8v1.5h-.8zM1318 147.3h.8v1.5h-.8zM1319 147.3h.8v1.5h-.8zM1320 147.3h.8v1.5h-.8zM1282 155.8h.8v1h-.8zM1283 155.8h.8v1h-.8zM1284 155.3h.8v1.5h-.8zM1285 155.3h.8v1.5h-.8zM1310 159.3h.8v1.5h-.8zM1311 159.3h.8v1.5h-.8zM1312 159.3h.8v1.5h-.8zM1282 171.8h.8v1h-.8zM1283 171.8h.8v1h-.8zM1284 171.3h.8v1.5h-.8zM1285 171.3h.8v1.5h-.8zM1318 175.3h.8v1.5h-.8zM1319 175.3h.8v1.5h-.8zM1320 175.3h.8v1.5h-.8zM1321 176.2h.8v.6h-.8zM1322 175.3h.8v1.5h-.8zM1323 175.3h.8v1.5h-.8zM1324 175.3h.8v1.5h-.8zM1325 175.3h.8v1.5h-.8zM1318 177.3h.8v1.5h-.8zM1319 177.3h.8v1.5h-.8zM1320 177.3h.8v1.5h-.8zM1321 178.2h.8v.6h-.8zM1322 177.3h.8v1.5h-.8zM1323 177.3h.8v1.5h-.8zM1324 177.3h.8v1.5h-.8zM1325 177.3h.8v1.5h-.8zM1282 183.8h.8v1h-.8zM1283 183.8h.8v1h-.8zM1284 183.3h.8v1.5h-.8zM1285 183.3h.8v1.5h-.8zM1291 189.3h.8v1.5h-.8zM1292 189.8h.8v1h-.8zM1293 189.3h.8v1.5h-.8zM1306 189.3h.8v1.5h-.8zM1307 189.3h.8v1.5h-.8zM1308 189.3h.8v1.5h-.8zM1309 190.2h.8v.6h-.8zM1310 189.3h.8v1.5h-.8zM1311 189.3h.8v1.5h-.8zM1312 189.3h.8v1.5h-.8zM1313 189.3h.8v1.5h-.8zM1321 199.3h.8v1.5h-.8zM1322 199.3h.8v1.5h-.8zM1323 199.3h.8v1.5h-.8zM1324 200.2h.8v.6h-.8zM1325 199.3h.8v1.5h-.8zM1326 199.3h.8v1.5h-.8zM1327 199.3h.8v1.5h-.8zM1328 199.3h.8v1.5h-.8zM1282 205.8h.8v1h-.8zM1283 205.8h.8v1h-.8zM1284 205.3h.8v1.5h-.8zM1285 205.3h.8v1.5h-.8zM1291 209.3h.8v1.5h-.8zM1292 209.8h.8v1h-.8zM1293 209.3h.8v1.5h-.8zM1306 209.3h.8v1.5h-.8zM1307 209.3h.8v1.5h-.8zM1308 209.3h.8v1.5h-.8zM1309 210.2h.8v.6h-.8zM1310 209.3h.8v1.5h-.8zM1311 209.3h.8v1.5h-.8zM1312 209.3h.8v1.5h-.8zM1313 209.3h.8v1.5h-.8zM1282 223.8h.8v1h-.8zM1283 223.8h.8v1h-.8zM1284 223.3h.8v1.5h-.8zM1285 223.3h.8v1.5h-.8zM1291 229.3h.8v1.5h-.8zM1292 229.8h.8v1h-.8zM1293 229.3h.8v1.5h-.8zM1306 229.3h.8v1.5h-.8zM1307 229.3h.8v1.5h-.8zM1308 229.3h.8v1.5h-.8zM1309 230.2h.8v.6h-.8zM1310 229.3h.8v1.5h-.8zM1311 229.3h.8v1.5h-.8zM1312 229.3h.8v1.5h-.8zM1313 229.3h.8v1.5h-.8zM1282 241.8h.8v1h-.8zM1283 241.8h.8v1h-.8zM1284 241.3h.8v1.5h-.8zM1285 241.3h.8v1.5h-.8zM1300 247.3h.8v1.5h-.8zM1301 247.3h.8v1.5h-.8zM1302 247.3h.8v1.5h-.8zM1303 248.2h.8v.6h-.8zM1304 247.3h.8v1.5h-.8zM1305 247.3h.8v1.5h-.8zM1306 247.3h.8v1.5h-.8zM1307 247.3h.8v1.5h-.8zM1302 257.3h.8v1.5h-.8zM1303 257.3h.8v1.5h-.8zM1304 257.3h.8v1.5h-.8zM1305 258.2h.8v.6h-.8zM1306 257.3h.8v1.5h-.8zM1307 257.3h.8v1.5h-.8zM1308 257.3h.8v1.5h-.8zM1309 257.3h.8v1.5h-.8zM1302 259.3h.8v1.5h-.8zM1303 259.3h.8v1.5h-.8zM1304 259.3h.8v1.5h-.8zM1305 260.2h.8v.6h-.8zM1306 259.3h.8v1.5h-.8zM1307 259.3h.8v1.5h-.8zM1308 259.3h.8v1.5h-.8zM1309 259.3h.8v1.5h-.8zM1306 267.3h.8v1.5h-.8zM1307 267.3h.8v1.5h-.8zM1308 267.3h.8v1.5h-.8zM1309 268.2h.8v.6h-.8zM1310 267.3h.8v1.5h-.8zM1311 267.3h.8v1.5h-.8zM1312 267.3h.8v1.5h-.8zM1313 267.3h.8v1.5h-.8zM1317 267.3h.8v1.5h-.8zM1318 267.3h.8v1.5h-.8zM1319 267.3h.8v1.5h-.8zM1320 268.2h.8v.6h-.8zM1321 267.3h.8v1.5h-.8zM1322 267.3h.8v1.5h-.8zM1323 267.3h.8v1.5h-.8zM1306 269.3h.8v1.5h-.8zM1307 269.3h.8v1.5h-.8zM1308 269.3h.8v1.5h-.8zM1309 270.2h.8v.6h-.8zM1310 269.3h.8v1.5h-.8zM1311 269.3h.8v1.5h-.8zM1312 269.3h.8v1.5h-.8zM1313 269.3h.8v1.5h-.8zM1317 269.3h.8v1.5h-.8zM1318 269.3h.8v1.5h-.8zM1319 269.3h.8v1.5h-.8zM1320 270.2h.8v.6h-.8zM1321 269.3h.8v1.5h-.8zM1322 269.3h.8v1.5h-.8zM1323 269.3h.8v1.5h-.8zM1306 277.3h.8v1.5h-.8zM1307 277.3h.8v1.5h-.8zM1308 277.3h.8v1.5h-.8zM1309 278.2h.8v.6h-.8zM1310 277.3h.8v1.5h-.8zM1311 277.3h.8v1.5h-.8zM1312 277.3h.8v1.5h-.8zM1313 277.3h.8v1.5h-.8zM1306 279.3h.8v1.5h-.8zM1307 279.3h.8v1.5h-.8zM1308 279.3h.8v1.5h-.8zM1309 280.2h.8v.6h-.8zM1310 279.3h.8v1.5h-.8zM1311 279.3h.8v1.5h-.8zM1312 279.3h.8v1.5h-.8zM1313 279.3h.8v1.5h-.8zM1302 287.3h.8v1.5h-.8zM1303 287.3h.8v1.5h-.8zM1304 287.3h.8v1.5h-.8zM1305 288.2h.8v.6h-.8zM1306 287.3h.8v1.5h-.8zM1307 287.3h.8v1.5h-.8zM1308 287.3h.8v1.5h-.8zM1309 287.3h.8v1.5h-.8z"/><path fill="#cccccc" d="M1310 94.2h.8v.6h-.8zM1306 96.2h.8v.6h-.8zM1306 98.2h.8v.6h-.8zM1298 99.8h.8v1h-.8zM1301 100.2h.8v.6h-.8zM1299 101.8h.8v1h-.8zM1309 101.8h.8v1h-.8zM1312 102.2h.8v.6h-.8zM1298 103.8h.8v1h-.8zM1303 103.3h.8v1.5h-.8zM1304 103.3h.8v1.5h-.8zM1307 104.2h.8v.6h-.8zM1298 111.8h.8v1h-.8zM1302 111.8h.8v1h-.8zM1307 111.8h.8v1h-.8zM1316 112.2h.8v.6h-.8zM1297 113.8h.8v1h-.8zM1300 114.2h.8v.6h-.8zM1304 113.3h.8v1.5h-.8zM1314 114.2h.8v.6h-.8zM1317 113.8h.8v1h-.8zM1318 113.8h.8v1h-.8zM1298 117.8h.8v1h-.8zM1306 117.8h.8v1h-.8zM1311 117.8h.8v1h-.8zM1314 118.2h.8v.6h-.8zM1297 129.8h.8v1h-.8zM1300 130.2h.8v.6h-.8zM1304 129.3h.8v1.5h-.8zM1314 130.2h.8v.6h-.8zM1317 129.8h.8v1h-.8zM1318 129.8h.8v1h-.8zM1298 135.8h.8v1h-.8zM1317 136.2h.8v.6h-.8zM1297 137.8h.8v1h-.8zM1298 137.8h.8v1h-.8zM1307 138.2h.8v.6h-.8zM1297 139.8h.8v1h-.8zM1307 139.8h.8v1h-.8zM1312 139.3h.8v1.5h-.8zM1321 140.2h.8v.6h-.8zM1298 143.8h.8v1h-.8zM1317 144.2h.8v.6h-.8zM1297 145.8h.8v1h-.8zM1298 145.8h.8v1h-.8zM1307 146.2h.8v.6h-.8zM1297 147.8h.8v1h-.8zM1307 147.8h.8v1h-.8zM1312 147.3h.8v1.5h-.8zM1321 148.2h.8v.6h-.8zM1305 155.8h.8v1h-.8zM1309 156.2h.8v.6h-.8zM1321 155.8h.8v1h-.8zM1327 156.2h.8v.6h-.8zM1339 155.8h.8v1h-.8zM1300 159.3h.8v1.5h-.8zM1300 164.2h.8v.6h-.8zM1308 171.8h.8v1h-.8zM1311 172.2h.8v.6h-.8zM1323 171.8h.8v1h-.8zM1326 172.2h.8v.6h-.8zM1338 171.8h.8v1h-.8zM1341 172.2h.8v.6h-.8zM1353 171.8h.8v1h-.8zM1303 176.2h.8v.6h-.8zM1310 176.2h.8v.6h-.8zM1313 176.2h.8v.6h-.8zM1316 176.2h.8v.6h-.8zM1327 176.2h.8v.6h-.8zM1303 178.2h.8v.6h-.8zM1310 178.2h.8v.6h-.8zM1313 178.2h.8v.6h-.8zM1316 178.2h.8v.6h-.8zM1327 178.2h.8v.6h-.8zM1308 183.8h.8v1h-.8zM1311 184.2h.8v.6h-.8zM1323 183.8h.8v1h-.8zM1326 184.2h.8v.6h-.8zM1338 183.8h.8v1h-.8zM1341 184.2h.8v.6h-.8zM1353 183.8h.8v1h-.8zM1302 187.8h.8v1h-.8zM1305 188.2h.8v.6h-.8zM1313 187.8h.8v1h-.8zM1316 188.2h.8v.6h-.8zM1297 189.8h.8v1h-.8zM1300 190.2h.8v.6h-.8zM1304 189.3h.8v1.5h-.8zM1314 190.2h.8v.6h-.8zM1317 189.8h.8v1h-.8zM1318 189.8h.8v1h-.8zM1299 193.8h.8v1h-.8zM1310 193.8h.8v1h-.8zM1320 194.2h.8v.6h-.8zM1299 195.8h.8v1h-.8zM1310 195.8h.8v1h-.8zM1320 196.2h.8v.6h-.8zM1301 199.3h.8v1.5h-.8zM1307 200.2h.8v.6h-.8zM1314 200.2h.8v.6h-.8zM1319 200.2h.8v.6h-.8zM1330 200.2h.8v.6h-.8zM1306 205.8h.8v1h-.8zM1312 206.2h.8v.6h-.8zM1324 205.8h.8v1h-.8zM1330 206.2h.8v.6h-.8zM1342 205.8h.8v1h-.8zM1297 209.8h.8v1h-.8zM1300 210.2h.8v.6h-.8zM1304 209.3h.8v1.5h-.8zM1314 210.2h.8v.6h-.8zM1317 209.8h.8v1h-.8zM1318 209.8h.8v1h-.8zM1299 213.8h.8v1h-.8zM1315 213.8h.8v1h-.8zM1326 213.8h.8v1h-.8zM1337 214.2h.8v.6h-.8zM1307 223.8h.8v1h-.8zM1313 224.2h.8v.6h-.8zM1324 223.8h.8v1h-.8zM1298 227.8h.8v1h-.8zM1304 228.2h.8v.6h-.8zM1297 229.8h.8v1h-.8zM1300 230.2h.8v.6h-.8zM1304 229.3h.8v1.5h-.8zM1314 230.2h.8v.6h-.8zM1317 229.8h.8v1h-.8zM1318 229.8h.8v1h-.8zM1303 233.8h.8v1h-.8zM1325 233.8h.8v1h-.8zM1332 233.3h.8v1.5h-.8zM1336 234.2h.8v.6h-.8zM1308 241.8h.8v1h-.8zM1318 242.2h.8v.6h-.8zM1329 241.8h.8v1h-.8zM1309 248.2h.8v.6h-.8zM1305 250.2h.8v.6h-.8zM1311 250.2h.8v.6h-.8zM1297 256.2h.8v.6h-.8zM1311 258.2h.8v.6h-.8zM1311 260.2h.8v.6h-.8zM1297 262.2h.8v.6h-.8zM1304 262.2h.8v.6h-.8zM1312 262.2h.8v.6h-.8zM1315 267.8h.8v1h-.8zM1325 268.2h.8v.6h-.8zM1315 269.8h.8v1h-.8zM1325 270.2h.8v.6h-.8zM1302 272.2h.8v.6h-.8zM1309 272.2h.8v.6h-.8zM1320 272.2h.8v.6h-.8zM1332 272.2h.8v.6h-.8zM1315 278.2h.8v.6h-.8zM1315 280.2h.8v.6h-.8zM1306 282.2h.8v.6h-.8zM1317 282.2h.8v.6h-.8zM1328 282.2h.8v.6h-.8zM1340 282.2h.8v.6h-.8zM1311 288.2h.8v.6h-.8zM1304 290.2h.8v.6h-.8zM1315 290.2h.8v.6h-.8zM1323 290.2h.8v.6h-.8zM1301 296.2h.8v.6h-.8zM1313 296.2h.8v.6h-.8z"/><path fill="#b5cea8" d="M1300 99.3h.8v1.5h-.8zM1311 101.3h.8v1.5h-.8zM1300 103.3h.8v1.5h-.8zM1301 103.3h.8v1.5h-.8zM1306 103.3h.8v1.5h-.8zM1300 111.3h.8v1.5h-.8zM1299 113.3h.8v1.5h-.8zM1313 117.3h.8v1.5h-.8zM1299 129.3h.8v1.5h-.8zM1309 139.3h.8v1.5h-.8zM1309 147.3h.8v1.5h-.8zM1304 187.3h.8v1.5h-.8zM1315 187.3h.8v1.5h-.8zM1299 189.3h.8v1.5h-.8zM1299 209.3h.8v1.5h-.8zM1300 227.3h.8v1.5h-.8zM1301 228.2h.8v.6h-.8zM1302 227.3h.8v1.5h-.8zM1303 227.3h.8v1.5h-.8zM1299 229.3h.8v1.5h-.8zM1327 233.3h.8v1.5h-.8zM1328 233.3h.8v1.5h-.8zM1329 233.3h.8v1.5h-.8zM1330 233.3h.8v1.5h-.8z"/><path fill="#dcdcaa" d="M1287 107.3h.8v1.5h-.8zM1288 107.8h.8v1h-.8zM1289 108.2h.8v.6h-.8zM1290 107.3h.8v1.5h-.8zM1291 107.8h.8v1h-.8zM1292 107.3h.8v1.5h-.8zM1293 107.3h.8v1.5h-.8zM1300 117.8h.8v1h-.8zM1301 117.8h.8v1h-.8zM1302 117.8h.8v1h-.8zM1287 125.8h.8v1h-.8zM1288 125.3h.8v1.5h-.8zM1289 125.3h.8v1.5h-.8zM1290 125.8h.8v1h-.8zM1291 125.3h.8v1.5h-.8zM1292 125.8h.8v1h-.8zM1293 126.2h.8v.6h-.8zM1294 125.3h.8v1.5h-.8zM1295 125.8h.8v1h-.8zM1287 155.8h.8v1h-.8zM1288 155.3h.8v1.5h-.8zM1289 155.8h.8v1h-.8zM1290 156.2h.8v.6h-.8zM1291 155.8h.8v1h-.8zM1292 155.3h.8v1.5h-.8zM1293 155.3h.8v1.5h-.8zM1286 163.8h.8v1h-.8zM1287 163.8h.8v1h-.8zM1288 163.8h.8v1h-.8zM1289 164.2h.8v.6h-.8zM1290 163.8h.8v1h-.8zM1291 163.8h.8v1h-.8zM1292 163.3h.8v1.5h-.8zM1293 163.3h.8v1.5h-.8zM1294 164.2h.8v.6h-.8zM1295 163.3h.8v1.5h-.8zM1296 163.3h.8v1.5h-.8zM1297 163.3h.8v1.5h-.8zM1287 171.8h.8v1h-.8zM1288 171.8h.8v1h-.8zM1289 171.8h.8v1h-.8zM1290 172.2h.8v.6h-.8zM1291 171.3h.8v1.5h-.8zM1292 171.8h.8v1h-.8zM1293 171.8h.8v1h-.8zM1294 172.2h.8v.6h-.8zM1295 171.3h.8v1.5h-.8zM1296 171.3h.8v1.5h-.8zM1286 175.8h.8v1h-.8zM1287 175.8h.8v1h-.8zM1288 175.8h.8v1h-.8zM1289 176.2h.8v.6h-.8zM1290 175.3h.8v1.5h-.8zM1291 175.8h.8v1h-.8zM1292 175.8h.8v1h-.8zM1293 176.2h.8v.6h-.8zM1294 175.3h.8v1.5h-.8zM1295 175.3h.8v1.5h-.8zM1296 175.3h.8v1.5h-.8zM1286 177.8h.8v1h-.8zM1287 177.8h.8v1h-.8zM1288 177.8h.8v1h-.8zM1289 178.2h.8v.6h-.8zM1290 177.3h.8v1.5h-.8zM1291 177.8h.8v1h-.8zM1292 177.8h.8v1h-.8zM1293 178.2h.8v.6h-.8zM1294 177.3h.8v1.5h-.8zM1295 177.3h.8v1.5h-.8zM1296 177.3h.8v1.5h-.8zM1287 183.3h.8v1.5h-.8zM1288 183.3h.8v1.5h-.8zM1289 183.8h.8v1h-.8zM1290 184.2h.8v.6h-.8zM1291 183.3h.8v1.5h-.8zM1292 183.8h.8v1h-.8zM1293 183.8h.8v1h-.8zM1294 184.2h.8v.6h-.8zM1295 183.3h.8v1.5h-.8zM1296 183.3h.8v1.5h-.8zM1286 199.3h.8v1.5h-.8zM1287 199.3h.8v1.5h-.8zM1288 199.8h.8v1h-.8zM1289 200.2h.8v.6h-.8zM1290 199.3h.8v1.5h-.8zM1291 199.3h.8v1.5h-.8zM1292 199.3h.8v1.5h-.8zM1293 199.3h.8v1.5h-.8zM1294 199.8h.8v1h-.8zM1295 199.8h.8v1h-.8zM1296 200.2h.8v.6h-.8zM1297 199.3h.8v1.5h-.8zM1298 199.3h.8v1.5h-.8zM1299 199.3h.8v1.5h-.8zM1287 205.3h.8v1.5h-.8zM1288 205.8h.8v1h-.8zM1289 205.8h.8v1h-.8zM1290 205.8h.8v1h-.8zM1291 205.3h.8v1.5h-.8zM1292 206.2h.8v.6h-.8zM1293 205.8h.8v1h-.8zM1294 205.8h.8v1h-.8zM1301 213.8h.8v1h-.8zM1302 213.3h.8v1.5h-.8zM1303 213.8h.8v1h-.8zM1304 213.3h.8v1.5h-.8zM1287 223.3h.8v1.5h-.8zM1288 223.3h.8v1.5h-.8zM1289 223.8h.8v1h-.8zM1290 223.8h.8v1h-.8zM1291 223.3h.8v1.5h-.8zM1292 223.3h.8v1.5h-.8zM1293 223.3h.8v1.5h-.8zM1294 223.8h.8v1h-.8zM1295 223.3h.8v1.5h-.8zM1287 241.3h.8v1.5h-.8zM1288 241.8h.8v1h-.8zM1289 241.8h.8v1h-.8zM1290 241.8h.8v1h-.8zM1291 241.8h.8v1h-.8zM1292 241.8h.8v1h-.8zM1293 241.8h.8v1h-.8zM1294 242.2h.8v.6h-.8zM1295 241.8h.8v1h-.8zM1296 241.3h.8v1.5h-.8zM1297 241.3h.8v1.5h-.8zM1286 249.3h.8v1.5h-.8zM1287 249.8h.8v1h-.8zM1288 249.3h.8v1.5h-.8zM1289 249.3h.8v1.5h-.8zM1290 249.3h.8v1.5h-.8zM1291 249.3h.8v1.5h-.8zM1292 249.8h.8v1h-.8zM1293 249.8h.8v1h-.8zM1294 249.3h.8v1.5h-.8zM1286 255.8h.8v1h-.8zM1287 255.3h.8v1.5h-.8zM1288 255.3h.8v1.5h-.8zM1289 255.8h.8v1h-.8zM1290 255.3h.8v1.5h-.8zM1291 255.8h.8v1h-.8zM1292 256.2h.8v.6h-.8zM1293 255.3h.8v1.5h-.8zM1294 255.8h.8v1h-.8zM1286 261.8h.8v1h-.8zM1287 261.3h.8v1.5h-.8zM1288 261.8h.8v1h-.8zM1289 262.2h.8v.6h-.8zM1290 261.8h.8v1h-.8zM1291 261.3h.8v1.5h-.8zM1292 261.3h.8v1.5h-.8zM1286 271.8h.8v1h-.8zM1287 271.8h.8v1h-.8zM1288 271.8h.8v1h-.8zM1289 272.2h.8v.6h-.8zM1290 271.3h.8v1.5h-.8zM1291 271.8h.8v1h-.8zM1292 271.8h.8v1h-.8zM1293 272.2h.8v.6h-.8zM1294 271.3h.8v1.5h-.8zM1295 271.3h.8v1.5h-.8zM1286 281.3h.8v1.5h-.8zM1287 281.3h.8v1.5h-.8zM1288 281.8h.8v1h-.8zM1289 282.2h.8v.6h-.8zM1290 281.3h.8v1.5h-.8zM1291 281.8h.8v1h-.8zM1292 281.8h.8v1h-.8zM1293 282.2h.8v.6h-.8zM1294 281.3h.8v1.5h-.8zM1295 281.3h.8v1.5h-.8zM1286 289.3h.8v1.5h-.8zM1287 289.8h.8v1h-.8zM1288 289.8h.8v1h-.8zM1289 289.8h.8v1h-.8zM1290 289.3h.8v1.5h-.8zM1291 290.2h.8v.6h-.8zM1292 289.8h.8v1h-.8zM1293 289.8h.8v1h-.8zM1286 295.3h.8v1.5h-.8zM1287 295.3h.8v1.5h-.8zM1288 295.8h.8v1h-.8zM1289 295.8h.8v1h-.8zM1290 295.3h.8v1.5h-.8zM1291 295.3h.8v1.5h-.8zM1292 295.3h.8v1.5h-.8zM1293 295.8h.8v1h-.8zM1294 295.3h.8v1.5h-.8z"/><path fill="#da70d6" d="M1290 113.3h.8v1.5h-.8zM1319 113.3h.8v1.5h-.8zM1286 115.3h.8v1.5h-.8zM1294 117.3h.8v1.5h-.8zM1296 117.3h.8v1.5h-.8zM1303 117.3h.8v1.5h-.8zM1309 117.3h.8v1.5h-.8zM1286 119.3h.8v1.5h-.8zM1290 129.3h.8v1.5h-.8zM1319 129.3h.8v1.5h-.8zM1286 131.3h.8v1.5h-.8zM1294 135.3h.8v1.5h-.8zM1296 135.3h.8v1.5h-.8zM1309 135.3h.8v1.5h-.8zM1316 135.3h.8v1.5h-.8zM1299 139.3h.8v1.5h-.8zM1310 139.3h.8v1.5h-.8zM1294 143.3h.8v1.5h-.8zM1296 143.3h.8v1.5h-.8zM1309 143.3h.8v1.5h-.8zM1316 143.3h.8v1.5h-.8zM1299 147.3h.8v1.5h-.8zM1310 147.3h.8v1.5h-.8zM1286 149.3h.8v1.5h-.8zM1287 159.3h.8v1.5h-.8zM1309 159.3h.8v1.5h-.8zM1313 159.3h.8v1.5h-.8zM1314 159.3h.8v1.5h-.8zM1284 161.3h.8v1.5h-.8zM1298 163.3h.8v1.5h-.8zM1299 163.3h.8v1.5h-.8zM1284 165.3h.8v1.5h-.8zM1297 175.3h.8v1.5h-.8zM1326 175.3h.8v1.5h-.8zM1297 177.3h.8v1.5h-.8zM1326 177.3h.8v1.5h-.8zM1290 189.3h.8v1.5h-.8zM1319 189.3h.8v1.5h-.8zM1286 191.3h.8v1.5h-.8zM1295 193.3h.8v1.5h-.8zM1297 193.3h.8v1.5h-.8zM1306 193.3h.8v1.5h-.8zM1308 193.3h.8v1.5h-.8zM1317 193.3h.8v1.5h-.8zM1319 193.3h.8v1.5h-.8zM1295 195.3h.8v1.5h-.8zM1297 195.3h.8v1.5h-.8zM1306 195.3h.8v1.5h-.8zM1308 195.3h.8v1.5h-.8zM1317 195.3h.8v1.5h-.8zM1319 195.3h.8v1.5h-.8zM1286 197.3h.8v1.5h-.8zM1300 199.3h.8v1.5h-.8zM1329 199.3h.8v1.5h-.8zM1290 209.3h.8v1.5h-.8zM1319 209.3h.8v1.5h-.8zM1286 211.3h.8v1.5h-.8zM1295 213.3h.8v1.5h-.8zM1297 213.3h.8v1.5h-.8zM1305 213.3h.8v1.5h-.8zM1311 213.3h.8v1.5h-.8zM1313 213.3h.8v1.5h-.8zM1322 213.3h.8v1.5h-.8zM1324 213.3h.8v1.5h-.8zM1333 213.3h.8v1.5h-.8zM1335 213.3h.8v1.5h-.8zM1336 213.3h.8v1.5h-.8zM1286 215.3h.8v1.5h-.8zM1290 229.3h.8v1.5h-.8zM1319 229.3h.8v1.5h-.8zM1286 231.3h.8v1.5h-.8zM1299 233.3h.8v1.5h-.8zM1301 233.3h.8v1.5h-.8zM1305 233.3h.8v1.5h-.8zM1314 233.3h.8v1.5h-.8zM1315 233.3h.8v1.5h-.8zM1321 233.3h.8v1.5h-.8zM1323 233.3h.8v1.5h-.8zM1335 233.3h.8v1.5h-.8zM1286 235.3h.8v1.5h-.8zM1299 247.3h.8v1.5h-.8zM1308 247.3h.8v1.5h-.8zM1295 249.3h.8v1.5h-.8zM1310 249.3h.8v1.5h-.8zM1295 255.3h.8v1.5h-.8zM1296 255.3h.8v1.5h-.8zM1301 257.3h.8v1.5h-.8zM1310 257.3h.8v1.5h-.8zM1301 259.3h.8v1.5h-.8zM1310 259.3h.8v1.5h-.8zM1293 261.3h.8v1.5h-.8zM1311 261.3h.8v1.5h-.8zM1305 267.3h.8v1.5h-.8zM1324 267.3h.8v1.5h-.8zM1305 269.3h.8v1.5h-.8zM1324 269.3h.8v1.5h-.8zM1296 271.3h.8v1.5h-.8zM1331 271.3h.8v1.5h-.8zM1305 277.3h.8v1.5h-.8zM1314 277.3h.8v1.5h-.8zM1305 279.3h.8v1.5h-.8zM1314 279.3h.8v1.5h-.8zM1296 281.3h.8v1.5h-.8zM1339 281.3h.8v1.5h-.8zM1301 287.3h.8v1.5h-.8zM1310 287.3h.8v1.5h-.8zM1294 289.3h.8v1.5h-.8zM1322 289.3h.8v1.5h-.8zM1295 295.3h.8v1.5h-.8zM1312 295.3h.8v1.5h-.8z"/><path fill="#6a9955" d="M1290 133.3h.8v1.5h-.8zM1291 133.3h.8v1.5h-.8zM1293 133.3h.8v1.5h-.8zM1290 141.3h.8v1.5h-.8zM1291 141.3h.8v1.5h-.8zM1293 141.3h.8v1.5h-.8zM1286 245.3h.8v1.5h-.8zM1287 245.3h.8v1.5h-.8zM1289 245.3h.8v1.5h-.8zM1290 246.2h.8v.6h-.8zM1291 245.3h.8v1.5h-.8zM1292 245.8h.8v1h-.8zM1293 245.3h.8v1.5h-.8zM1294 245.3h.8v1.5h-.8zM1295 245.3h.8v1.5h-.8zM1296 245.3h.8v1.5h-.8zM1297 245.8h.8v1h-.8zM1298 245.8h.8v1h-.8zM1299 245.3h.8v1.5h-.8zM1286 253.3h.8v1.5h-.8zM1287 253.3h.8v1.5h-.8zM1289 253.3h.8v1.5h-.8zM1290 254.2h.8v.6h-.8zM1291 253.8h.8v1h-.8zM1292 253.3h.8v1.5h-.8zM1293 253.8h.8v1h-.8zM1286 265.3h.8v1.5h-.8zM1287 265.3h.8v1.5h-.8zM1289 265.3h.8v1.5h-.8zM1290 266.2h.8v.6h-.8zM1291 265.8h.8v1h-.8zM1292 265.3h.8v1.5h-.8zM1293 265.8h.8v1h-.8zM1294 266.2h.8v.6h-.8zM1295 265.3h.8v1.5h-.8zM1296 265.8h.8v1h-.8zM1297 265.8h.8v1h-.8zM1286 275.3h.8v1.5h-.8zM1287 275.3h.8v1.5h-.8zM1289 275.3h.8v1.5h-.8zM1290 276.2h.8v.6h-.8zM1291 275.3h.8v1.5h-.8zM1292 275.3h.8v1.5h-.8zM1293 275.8h.8v1h-.8zM1294 276.2h.8v.6h-.8zM1295 275.3h.8v1.5h-.8zM1296 275.8h.8v1h-.8zM1297 275.8h.8v1h-.8zM1286 285.3h.8v1.5h-.8zM1287 285.3h.8v1.5h-.8zM1289 285.3h.8v1.5h-.8zM1290 286.2h.8v.6h-.8zM1291 285.3h.8v1.5h-.8zM1292 285.8h.8v1h-.8zM1293 285.8h.8v1h-.8zM1294 285.8h.8v1h-.8zM1295 285.3h.8v1.5h-.8zM1286 293.3h.8v1.5h-.8zM1287 293.3h.8v1.5h-.8zM1289 293.3h.8v1.5h-.8zM1290 294.2h.8v.6h-.8zM1292 293.3h.8v1.5h-.8zM1293 293.3h.8v1.5h-.8zM1294 293.8h.8v1h-.8zM1295 293.8h.8v1h-.8zM1296 293.3h.8v1.5h-.8zM1297 293.3h.8v1.5h-.8zM1298 293.3h.8v1.5h-.8zM1299 293.8h.8v1h-.8zM1300 293.3h.8v1.5h-.8z"/></g></svg>
<div id="vsb"></div>
<div id="cursormark"></div>
<div id="leftb"></div>
<div id="status"></div>
<div class="st" style="left:216px">Default (stm32-f407vg-sdr)</div>
<div class="st" style="left:479px">Auto</div>
<div class="st" style="left:856px">行 107，列 2</div>
<div class="st" style="left:982px">空格: 4</div>
<div class="st" style="left:1062px;transform-origin:0 0;transform:scaleX(0.907)">UTF-8</div>
<div class="st" style="left:1133px;transform-origin:0 0;transform:scaleX(0.83)">CRLF</div>
<div class="st" style="left:1195px">{ }</div>
<div class="st" style="left:1223px">C</div>
<div class="st" style="left:1256px">PlatformIO</div>

<svg id="ov" width="1398" height="1085" viewBox="0 0 1398 1085">
  <!-- C icons -->
  <path d="M36 19.2C34.8 18.4 33.2 18.1 31.2 18.1C26.6 18.1 24 21.2 24 25.45C24 29.8 26.6 32.8 31.2 32.8C33.2 32.8 34.8 32.5 36 31.7L36 28.3C35 29 33.6 29.4 32 29.4C29.3 29.4 27.7 27.8 27.7 25.45C27.7 23.1 29.3 21.5 32 21.5C33.6 21.5 35 21.9 36 22.6Z" fill="#519aba"/>
  <path transform="translate(180,0)" d="M36 19.2C34.8 18.4 33.2 18.1 31.2 18.1C26.6 18.1 24 21.2 24 25.45C24 29.8 26.6 32.8 31.2 32.8C33.2 32.8 34.8 32.5 36 31.7L36 28.3C35 29 33.6 29.4 32 29.4C29.3 29.4 27.7 27.8 27.7 25.45C27.7 23.1 29.3 21.5 32 21.5C33.6 21.5 35 21.9 36 22.6Z" fill="#519aba"/>
  <path transform="translate(80.9,61.7) scale(1.05,0.973) translate(-24,-18.1)" d="M36 19.2C34.8 18.4 33.2 18.1 31.2 18.1C26.6 18.1 24 21.2 24 25.45C24 29.8 26.6 32.8 31.2 32.8C33.2 32.8 34.8 32.5 36 31.7L36 28.3C35 29 33.6 29.4 32 29.4C29.3 29.4 27.7 27.8 27.7 25.45C27.7 23.1 29.3 21.5 32 21.5C33.6 21.5 35 21.9 36 22.6Z" fill="#519aba"/>
  <!-- close x -->
  <path d="M153 20.3L164.2 31.7M164.2 20.3L153 31.7" stroke="#ffffff" stroke-width="1.9" fill="none"/>
  <!-- breadcrumb chevrons -->
  <path d="M57.3 62L64.8 69.2L57.3 76.4" stroke="#a9a9a9" stroke-width="1.5" fill="none"/>
  <path d="M158.3 62L165.8 69.2L158.3 76.4" stroke="#a9a9a9" stroke-width="1.5" fill="none"/>
  <!-- cube -->
  <g transform="translate(176,58)"><path d="M10 1.2L18.6 5.8V15.2L10 19.8L1.4 15.2V5.8Z M1.4 5.8L10 10.5L18.6 5.8 M10 10.5V19.8" stroke="#b180d7" stroke-width="1.6" fill="none" stroke-linejoin="round"/></g>
  <!-- right actions -->
  <g transform="translate(1227,17)"><path d="M1.5 9.5L7 16L20.5 1.5" stroke="#cccccc" stroke-width="1.5" fill="none"/></g>
  <g transform="translate(1256,22)"><path d="M1 1.5L6 6.5L11 1.5" stroke="#cccccc" stroke-width="1.5" fill="none"/></g>
  <g transform="translate(1289,15)"><path d="M5 1V6M11 1V6M2 6H14V10C14 14 11 16 8 16C5 16 2 14 2 10Z M8 16V21" stroke="#cccccc" stroke-width="1.45" fill="none"/></g>
  <g transform="translate(1325,15)"><rect x="1.5" y="1.5" width="19" height="18" rx="2" stroke="#cccccc" stroke-width="1.45" fill="none"/><path d="M11 1.5V19.5" stroke="#cccccc" stroke-width="1.45"/></g>
  <g transform="translate(1365,23)"><circle cx="2" cy="3" r="1.7" fill="#cccccc"/><circle cx="10" cy="3" r="1.7" fill="#cccccc"/><circle cx="18" cy="3" r="1.7" fill="#cccccc"/></g>
  <!-- status icons -->
  <g transform="translate(12,1063)"><path d="M1 3.5H15M5.5 3.5V1.5H10.5V3.5M2.5 3.5L3.5 16.5H12.5L13.5 3.5M6 6.5V14M10 6.5V14" stroke="#cccccc" stroke-width="1.6" fill="none"/></g>
  <g transform="translate(56,1063)"><path d="M6 1.5H12M7 1.5V7L1.5 16.5H16.5L11 7V1.5 M4 12H14" stroke="#cccccc" stroke-width="1.6" fill="none" stroke-linejoin="round"/></g>
  <g transform="translate(103,1063)"><path d="M4 1V5M10 1V5M1.5 5H12.5V9C12.5 12 10 13.5 7 13.5C4 13.5 1.5 12 1.5 9Z M7 13.5V18.5" stroke="#cccccc" stroke-width="1.6" fill="none"/></g>
  <g transform="translate(145,1063)"><rect x="1" y="1" width="18" height="17" rx="1.5" stroke="#cccccc" stroke-width="1.6" fill="none"/><path d="M8 5.5L12 9.5L8 13.5" stroke="#cccccc" stroke-width="1.6" fill="none"/></g>
  <g transform="translate(189,1063)"><path d="M8 12V17H19.5V5H10L8 2H1.5V8" stroke="#cccccc" stroke-width="1.5" fill="none"/><circle cx="5" cy="13" r="3.8" stroke="#cccccc" stroke-width="1.5" fill="none"/><circle cx="5" cy="13" r="1.2" fill="#cccccc"/></g>
  <g transform="translate(458,1063)"><path d="M3.5 1V5M9.5 1V5M1.5 5H11.5V9C11.5 12 9 13.5 6.5 13.5C4 13.5 1.5 12 1.5 9Z M6.5 13.5V18.5" stroke="#cccccc" stroke-width="1.6" fill="none"/></g>
  <g transform="translate(1367,1063)"><path d="M2 15.5H16L14 12.5V8C14 4.5 12 2 9 2C6 2 4 4.5 4 8V12.5Z M7 17.5Q9 19.5 11 17.5" stroke="#cccccc" stroke-width="1.6" fill="none" stroke-linejoin="round"/></g>
  <!-- watermark logo -->
  <g stroke="#6a4440" stroke-width="1.4" fill="#4e2622"><path d="M1239.5 1010.7H1265.7Q1273 1010.7 1273 1018V1026.5H1264.3V1020.1H1244.2Q1241.2 1020.1 1241.2 1023.1V1039Q1241.2 1042 1244.2 1042H1264.3V1035.6H1273V1043.4Q1273 1050.7 1265.7 1050.7H1239.5Q1232.2 1050.7 1232.2 1043.4V1018Q1232.2 1010.7 1239.5 1010.7Z"/><path d="M1246.9 1002L1258.2 993.3V1056L1246.9 1065Z"/></g>
  <g fill="#4e2622"><path d="M1239.5 1010.7H1265.7Q1273 1010.7 1273 1018V1026.5H1264.3V1020.1H1244.2Q1241.2 1020.1 1241.2 1023.1V1039Q1241.2 1042 1244.2 1042H1264.3V1035.6H1273V1043.4Q1273 1050.7 1265.7 1050.7H1239.5Q1232.2 1050.7 1232.2 1043.4V1018Q1232.2 1010.7 1239.5 1010.7Z"/><path d="M1246.9 1002L1258.2 993.3V1056L1246.9 1065Z"/></g>
</svg>
<div class="wmzh">科创研究院</div>
<div class="wmen">kechuang.org</div>
</body></html>
